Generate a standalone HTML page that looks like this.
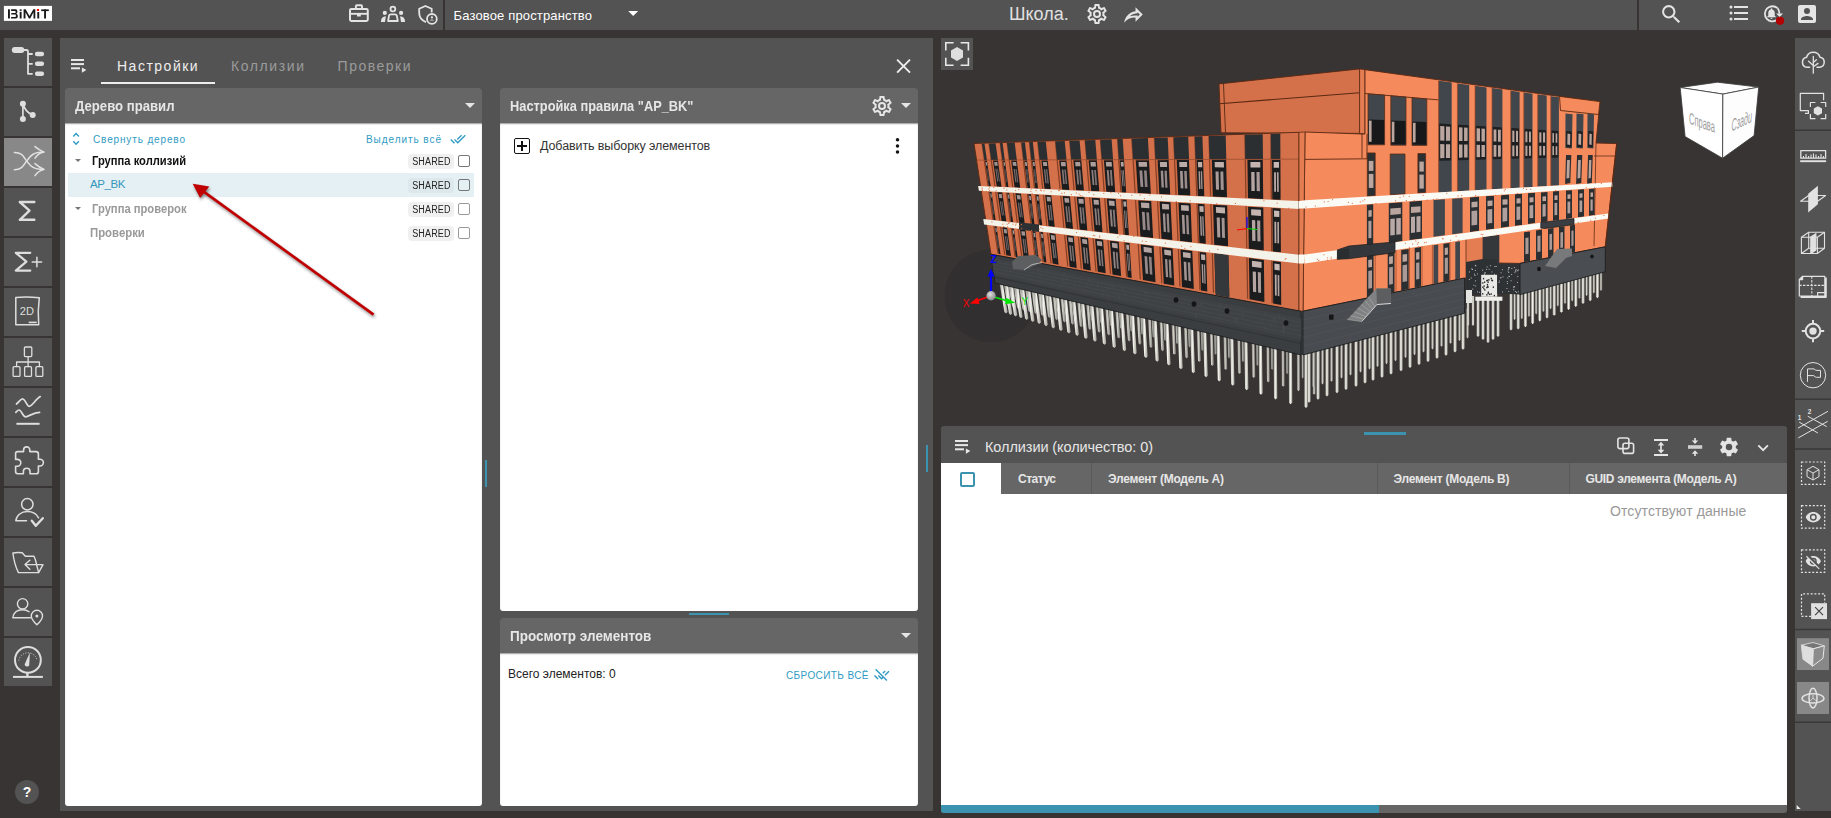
<!DOCTYPE html>
<html lang="ru">
<head>
<meta charset="utf-8">
<title>BIMIT</title>
<style>
*{box-sizing:border-box;margin:0;padding:0}
html,body{width:1831px;height:818px;overflow:hidden;background:#383433;font-family:"Liberation Sans",sans-serif;}
.abs{position:absolute}
#top{position:absolute;left:0;top:0;width:1831px;height:30px;background:#535353}
#logo{position:absolute;left:4px;top:6px;width:48px;height:15px;background:#fff}
.vdiv{position:absolute;top:0;width:2px;height:30px;background:#383433}
.ttxt{position:absolute;color:#fff;white-space:nowrap}
svg{position:absolute;overflow:visible}
/* sidebar */
.sb{position:absolute;left:4px;width:48px;height:48px;background:#535353}
.sb.act{background:#888}
/* main panel */
#main{position:absolute;left:60px;top:38px;width:873px;height:773px;background:#535353}
.tab{position:absolute;top:58px;font-size:14px;letter-spacing:1.5px;color:#9b9b9b;white-space:nowrap}
.phead{position:absolute;height:35px;background:#666;border-radius:4px 4px 0 0;color:#e6e6e6;font-weight:bold;font-size:13.5px;line-height:36px;padding-left:10px;white-space:nowrap}
.pbody{position:absolute;background:#fff;border-radius:0 0 3px 3px;box-shadow:inset 0 1.5px 1.5px -0.5px rgba(0,0,0,.4)}
.caret{position:absolute;width:0;height:0;border-left:5px solid transparent;border-right:5px solid transparent;border-top:5px solid #e6e6e6}
.row{position:absolute;left:69px;width:410px;height:24px}
.shared{position:absolute;left:408px;width:46px;height:15px;border-radius:4px;background:#f0f0f0;color:#222;font-size:10px;line-height:15px;text-align:center;letter-spacing:.2px}
.cb{position:absolute;left:458px;width:12px;height:12px;border:1.5px solid #777;border-radius:2px;background:#fff}
#right{position:absolute;left:1795px;top:38px;width:36px;height:773px;background:#535353}

.lnk{font-size:10px;letter-spacing:1px;color:#2f9bc4;white-space:nowrap}
.trow{font-size:12px;white-space:nowrap}
.tcar{width:0;height:0;border-left:3.3px solid transparent;border-right:3.3px solid transparent;border-top:3.6px solid #777}
.dot{width:3.4px;height:3.4px;border-radius:50%;background:#111}
.th{top:472px;font-size:12px;font-weight:bold;color:#e6e6e6;white-space:nowrap}
.sx{display:inline-block;transform-origin:left center;white-space:nowrap}
.shared span{display:inline-block;transform:scaleX(.9);transform-origin:center}
</style>
</head>
<body>
<!-- TOP BAR -->
<div id="top"></div>
<svg style="left:0;top:0" width="56" height="30" viewBox="0 0 56 30">
<rect x="3.9" y="5.9" width="48.1" height="15" fill="#fff"/>
<g fill="#1a1a1a">
<rect x="8" y="9.3" width="1.9" height="9.2"/>
<path d="M11.1 9.3 H15.6 Q17.4 9.3 17.4 11.2 V11.7 Q17.4 13.4 16.2 13.8 Q17.8 14.2 17.8 16 V16.5 Q17.8 18.5 15.8 18.5 H11.1 V16.9 H15.2 Q15.9 16.9 15.9 16.2 V15.4 Q15.9 14.6 15.2 14.6 H11.3 V13 H15 Q15.6 13 15.6 12.4 V11.5 Q15.6 10.9 15 10.9 H11.1 Z"/>
<rect x="19.7" y="9.3" width="1.9" height="1.6"/>
<rect x="19.7" y="11.8" width="1.9" height="6.7"/>
<path d="M23.6 18.5 V9.3 H25.6 L29.5 16 L33.4 9.3 H35.3 V18.5 H33.5 V12.2 L30.2 18.5 H28.9 L25.5 12.2 V18.5 Z"/>
<rect x="37.3" y="12" width="1.9" height="6.5"/>
<rect x="41.2" y="9.4" width="7.6" height="1.7"/>
<rect x="44.1" y="9.4" width="1.9" height="9.1"/>
</g>
<rect x="36.9" y="9" width="2.1" height="2" fill="#f00"/>
</svg>
<div class="vdiv" style="left:443px"></div>
<div class="vdiv" style="left:1637px"></div>
<div class="ttxt" id="t1" style="left:453.5px;top:7.5px;font-size:13px;letter-spacing:0.15px;">Базовое пространство</div>
<div class="ttxt" id="t2" style="left:1009px;top:4px;font-size:18px;color:#e0e0e0">Школа.</div>

<svg style="left:1085.4px;top:1.95px" width="24" height="24" viewBox="0 0 24 24"><path fill="#e4e4e4" d="M12,8A4,4 0 0,1 16,12A4,4 0 0,1 12,16A4,4 0 0,1 8,12A4,4 0 0,1 12,8M12,10A2,2 0 0,0 10,12A2,2 0 0,0 12,14A2,2 0 0,0 14,12A2,2 0 0,0 12,10M10,22C9.75,22 9.54,21.82 9.5,21.58L9.13,18.93C8.5,18.68 7.96,18.34 7.44,17.94L4.95,18.95C4.73,19.03 4.46,18.95 4.34,18.73L2.34,15.27C2.21,15.05 2.27,14.78 2.46,14.63L4.57,12.97L4.5,12L4.57,11L2.46,9.37C2.27,9.22 2.21,8.95 2.34,8.73L4.34,5.27C4.46,5.05 4.73,4.96 4.95,5.05L7.44,6.05C7.96,5.66 8.5,5.32 9.13,5.07L9.5,2.42C9.54,2.18 9.75,2 10,2H14C14.25,2 14.46,2.18 14.5,2.42L14.87,5.07C15.5,5.32 16.04,5.66 16.56,6.05L19.05,5.05C19.27,4.96 19.54,5.05 19.66,5.27L21.66,8.73C21.79,8.95 21.73,9.22 21.54,9.37L19.43,11L19.5,12L19.43,13L21.54,14.63C21.73,14.78 21.79,15.05 21.66,15.27L19.66,18.73C19.54,18.95 19.27,19.04 19.05,18.95L16.56,17.95C16.04,18.34 15.5,18.68 14.87,18.93L14.5,21.58C14.46,21.82 14.25,22 14,22H10M11.25,4L10.88,6.61C9.68,6.86 8.62,7.5 7.85,8.39L5.44,7.35L4.69,8.65L6.8,10.2C6.4,11.37 6.4,12.64 6.8,13.8L4.68,15.36L5.43,16.66L7.86,15.62C8.63,16.5 9.68,17.14 10.87,17.38L11.24,20H12.76L13.13,17.39C14.32,17.14 15.37,16.5 16.14,15.62L18.57,16.66L19.32,15.36L17.2,13.81C17.6,12.64 17.6,11.37 17.2,10.2L19.31,8.65L18.56,7.35L16.15,8.39C15.38,7.5 14.32,6.86 13.12,6.62L12.75,4H11.25Z"/></svg>
<svg style="left:1120.9px;top:2.0px" width="24.9" height="24.9" viewBox="0 0 24 24"><path fill="#e4e4e4" d="M14,5V9C7,10 4,15 3,20C5.5,16.5 9,14.9 14,14.9V19L21,12L14,5M16,9.83L18.17,12L16,14.17V12.9H14C11.93,12.9 10.07,13.28 8.34,13.85C9.74,12.46 11.54,11.37 14.28,11L16,10.73V9.83Z"/></svg>
<svg style="left:1658.8px;top:1.6px" width="24.7" height="24.7" viewBox="0 0 24 24"><path fill="#e4e4e4" d="M9.5,3A6.5,6.5 0 0,1 16,9.5C16,11.11 15.41,12.59 14.44,13.73L14.71,14H15.5L20.5,19L19,20.5L14,15.5V14.71L13.73,14.44C12.59,15.41 11.11,16 9.5,16A6.5,6.5 0 0,1 3,9.5A6.5,6.5 0 0,1 9.5,3M9.5,5C7,5 5,7 5,9.5C5,12 7,14 9.5,14C12,14 14,12 14,9.5C14,7 12,5 9.5,5Z"/></svg>
<svg style="left:1727.4px;top:1.4px" width="24" height="24" viewBox="0 0 24 24"><path fill="#e4e4e4" d="M7,5H21V7H7V5M7,13V11H21V13H7M4,4.5A1.5,1.5 0 0,1 5.5,6A1.5,1.5 0 0,1 4,7.5A1.5,1.5 0 0,1 2.5,6A1.5,1.5 0 0,1 4,4.5M4,10.5A1.5,1.5 0 0,1 5.5,12A1.5,1.5 0 0,1 4,13.5A1.5,1.5 0 0,1 2.5,12A1.5,1.5 0 0,1 4,10.5M7,19V17H21V19H7M4,16.5A1.5,1.5 0 0,1 5.5,18A1.5,1.5 0 0,1 4,19.5A1.5,1.5 0 0,1 2.5,18A1.5,1.5 0 0,1 4,16.5Z"/></svg>
<svg style="left:1795px;top:1.9px" width="24" height="24" viewBox="0 0 24 24"><path fill="#e4e4e4" d="M6,17C6,15 10,13.9 12,13.9C14,13.9 18,15 18,17V18H6M15,9A3,3 0 0,1 12,12A3,3 0 0,1 9,9A3,3 0 0,1 12,6A3,3 0 0,1 15,9M3,5V19A2,2 0 0,0 5,21H19A2,2 0 0,0 21,19V5A2,2 0 0,0 19,3H5C3.89,3 3,3.9 3,5Z"/></svg>
<svg id="topicons" style="left:0;top:0" width="1831" height="30" viewBox="0 0 1831 30" fill="none" stroke="#e4e4e4" stroke-linejoin="round">
<!-- briefcase -->
<rect x="350" y="9.1" width="17.8" height="11.8" rx="1.4" stroke-width="2"/>
<path d="M355.9 8.5 V6.2 Q355.9 5.2 356.9 5.2 H361 Q362 5.2 362 6.2 V8.5" stroke-width="1.9"/>
<path d="M350.5 13.8 H367.5" stroke-width="1.9"/>
<rect x="357" y="14" width="3.8" height="2.6" rx="0.6" fill="#e4e4e4" stroke="none"/>
<!-- people -->
<circle cx="392.9" cy="9" r="2.4" stroke-width="1.8"/>
<path d="M388.1 21 L389 15.6 Q389.4 14.3 390.8 14.3 H395 Q396.4 14.3 396.8 15.6 L397.8 21 Z" stroke-width="1.8"/>
<circle cx="384.8" cy="12.9" r="2.1" fill="#e4e4e4" stroke="none"/>
<circle cx="401.1" cy="12.9" r="2.1" fill="#e4e4e4" stroke="none"/>
<path d="M380.9 21.9 Q381 16.6 385.9 16.2 L385 21.9 Z" fill="#e4e4e4" stroke="none"/>
<path d="M405.1 21.9 Q405 16.6 400.1 16.2 L401 21.9 Z" fill="#e4e4e4" stroke="none"/>
<!-- shield -->
<path d="M426 22.2 C421 20 419.2 17 419.2 13 V8.8 L425.4 6 L431.7 8.8 V12.4" stroke-width="1.8"/>
<circle cx="431.9" cy="18.9" r="4.9" stroke-width="1.8"/>
<circle cx="431.9" cy="17.4" r="1.1" fill="#e4e4e4" stroke="none"/>
<path d="M429.6 20.6 Q431.9 18.4 434.2 20.6 Z" fill="#e4e4e4" stroke="none"/>
<!-- dropdown arrow -->
<path d="M628.2 11 H638.2 L633.2 16 Z" fill="#fff" stroke="none"/>
<!-- bell cycle -->
<path d="M1777.6 8.2 A7.6 7.6 0 1 0 1777.2 19.8" stroke-width="1.8"/>
<path d="M1776.2 13.4 H1783 L1779.6 17 Z" fill="#e4e4e4" stroke="none"/>
<path d="M1777.6 8.2 A7.6 7.6 0 0 1 1779.3 13.6" stroke-width="1.8"/>
<circle cx="1780" cy="20.8" r="4.1" fill="#b30000" stroke="none"/>
</svg>
<svg style="left:1764.9px;top:6.6px" width="13" height="13" viewBox="0 0 24 24"><path fill="#e4e4e4" d="M12,22A2,2 0 0,0 14,20H10A2,2 0 0,0 12,22M18,16V11C18,7.93 16.36,5.36 13.5,4.68V4A1.5,1.5 0 0,0 12,2.5A1.5,1.5 0 0,0 10.500,4V4.68C7.63,5.36 6,7.92 6,11V16L4,18V19H20V18L18,16Z"/></svg>

<!-- SIDEBAR -->
<div id="sidebar">
<div class="sb" style="top:38px"></div>
<div class="sb" style="top:88px"></div>
<div class="sb act" style="top:138px"></div>
<div class="sb" style="top:188px"></div>
<div class="sb" style="top:238px"></div>
<div class="sb" style="top:288px"></div>
<div class="sb" style="top:338px"></div>
<div class="sb" style="top:388px"></div>
<div class="sb" style="top:438px"></div>
<div class="sb" style="top:488px"></div>
<div class="sb" style="top:538px"></div>
<div class="sb" style="top:588px"></div>
<div class="sb" style="top:638px"></div>
<svg id="sbicons" style="left:0;top:0" width="56" height="700" viewBox="0 0 56 700" fill="none" stroke="#dedede" stroke-linecap="round" stroke-linejoin="round">
<!-- 1 tree -->
<rect x="11.8" y="47" width="12.5" height="6" rx="3" fill="#dedede" stroke="none"/>
<path d="M23 50 H26.5 Q28 50 28 51.5 V73.8 H32.7 M28 54 H32.7 M28 63.8 H32.7" stroke-width="1.8" stroke-linecap="butt"/>
<rect x="34.9" y="51.8" width="9.2" height="4.4" rx="2.2" fill="#dedede" stroke="none"/>
<rect x="34.9" y="61.6" width="9.2" height="4.4" rx="2.2" fill="#dedede" stroke="none"/>
<rect x="34.9" y="71.5" width="9.2" height="4.4" rx="2.2" fill="#dedede" stroke="none"/>
<!-- 2 branch -->
<circle cx="22.9" cy="103.8" r="3" fill="#dedede" stroke="none"/>
<circle cx="22.9" cy="119" r="3" fill="#dedede" stroke="none"/>
<circle cx="32.7" cy="115" r="3" fill="#dedede" stroke="none"/>
<path d="M22.9 103.8 V119 M23.2 104 Q25 112 32.7 115" stroke-width="1.7"/>
<!-- 3 shuffle -->
<g stroke-width="1.5" stroke="#e2e2e2">
<path d="M14.4 152.4 C23 152.4 24 158 26.7 161 C29.4 164 31 169.4 43.5 169.4"/>
<path d="M14.4 169.7 C23 169.7 24 164 26.7 161 C29.4 158 31 152.1 43.5 152.1"/>
<path d="M35 146.6 Q39 150 44 152.1 Q38 153.5 35 158.2"/>
<path d="M35 163.6 Q39 167.3 44 169.4 Q38 171 35 175.6"/>
</g>
<!-- 4 sigma -->
<path d="M34.3 202 H19.8 L29.5 210.6 L19.8 219.8 H34.3" stroke-width="2.4"/>
<!-- 5 sigma+ -->
<path d="M30.3 252.8 H15.8 L26.4 261.6 L15.8 270.6 H30.3" stroke-width="2.2"/>
<path d="M32.2 262 H41.6 M36.9 257.3 V266.7" stroke-width="1.5"/>
<!-- 6 2D -->
<path d="M15.8 297.5 Q27 296.3 39.3 297.8 Q37.5 311 38.7 324.8 H15.8 Z" stroke-width="1.5"/>
<path d="M28.7 322.4 H36.7" stroke-width="1.6" stroke-linecap="butt"/>
<text x="19.8" y="314.8" font-family="Liberation Sans, sans-serif" font-size="11.5" fill="#dedede" stroke="none" textLength="14.2" lengthAdjust="spacingAndGlyphs">2D</text>
<!-- 7 org chart -->
<g stroke-width="1.3">
<rect x="24.4" y="347" width="7.4" height="9.6" rx="1"/>
<path d="M28.1 356.6 V366.6 M16.6 366.6 V362 H39.4 V366.6"/>
<rect x="13.1" y="366.7" width="6.9" height="9.7" rx="1"/>
<rect x="24.6" y="366.7" width="6.9" height="9.7" rx="1"/>
<rect x="35.9" y="366.7" width="6.9" height="9.7" rx="1"/>
</g>
<!-- 8 waves -->
<g stroke-width="1.7">
<path d="M16.5 404 C19 402 21 398.5 23 399 C25.5 399.6 27 406.3 29.3 406.3 C32 406.3 36 399 40.3 396.6"/>
<path d="M15.8 412.3 C17 411 18 409.8 19.3 410 C21.5 410.4 23 417 25.6 416.8 C29 416.5 33 412.6 39.6 412.3"/>
<path d="M16.4 423.8 H39.6" stroke-width="2" stroke-linecap="butt"/>
</g>
<!-- 9 puzzle -->
<path stroke-width="1.6" d="M17.6 451.6 H23.6 V450 A3.1 3.1 0 0 1 29.8 450 V451.6 H36 Q38.4 451.6 38.4 454 V459.2 H40 A3.4 3.4 0 0 1 40 466 H38.4 V471.4 Q38.4 473.8 36 473.8 H30 V471.6 A3.3 3.3 0 0 0 23.4 471.6 V473.8 H17.6 Q15.6 473.8 15.6 471.6 V466.2 H17.4 A3.4 3.4 0 0 0 17.4 459.4 H15.6 V453.8 Q15.6 451.6 17.6 451.6 Z"/>
<!-- 10 user check -->
<circle cx="27.3" cy="504.2" r="5.7" stroke-width="1.5"/>
<path d="M26.5 520.8 H15.8 C16.5 515 21.5 511.6 27.3 511.6 C32.5 511.6 36.6 514 38.6 517.8" stroke-width="1.5"/>
<path d="M31.8 520.8 L35.8 525.8 L42.8 518.2" stroke-width="2.4"/>
<!-- 11 folder arrow -->
<g stroke-width="1.4">
<path d="M12.9 553 Q17.5 552 22.2 552.8 L25.3 556.2 H34 Q35.8 560 36.6 564.6 H43 L38.6 572.6 H18.4 Q14.2 564 12.9 553 Z"/>
<path d="M36.6 564.6 Q37.6 568.5 38.6 572.6"/>
<path d="M25.2 564.6 H36.6 M29.8 560.2 L25 564.6 L29.8 569.2"/>
</g>
<!-- 12 user pin -->
<circle cx="22.6" cy="603.8" r="5.2" stroke-width="1.4"/>
<path d="M30.4 617.8 H12.8 C13.6 612.6 17.6 609.8 22.6 609.8 C25 609.8 27.2 610.4 29 611.8" stroke-width="1.4"/>
<path d="M36.9 624.8 C33.6 621.6 31.3 619 31.3 615.9 A5.6 5.6 0 0 1 42.5 615.9 C42.5 619 40.2 621.6 36.9 624.8 Z" stroke-width="1.4"/>
<circle cx="36.9" cy="616" r="1.5" fill="#dedede" stroke="none"/>
<!-- 13 gauge -->
<circle cx="27.9" cy="659.9" r="12.9" stroke-width="2"/>
<path d="M18.7 660.6 A9.4 9.4 0 0 1 37.1 660" stroke-width="1" stroke-dasharray="1 1.6" stroke-linecap="butt"/>
<path d="M29.9 652.6 L24.6 664.4 A2.6 2.6 0 0 0 29.2 665.6 Z" fill="#dedede" stroke="none"/>
<path d="M27.4 672.6 V676" stroke-width="2.4" stroke-linecap="butt"/>
<path d="M13 676.9 H42.9" stroke-width="2" stroke-linecap="butt"/>
</svg>
<div class="abs" style="left:15px;top:780px;width:24px;height:24px;border-radius:12px;background:#535353;color:#fff;font-weight:bold;font-size:14px;line-height:24px;text-align:center">?</div>
</div>

<!-- MAIN PANEL -->
<div id="main"></div>
<div class="tab" id="tab1" style="left:117px;color:#eee">Настройки</div>
<div class="tab" id="tab2" style="left:231px;letter-spacing:1.6px">Коллизии</div>
<div class="tab" id="tab3" style="left:337.6px">Проверки</div>
<div class="abs" style="left:101px;top:82px;width:114px;height:2px;background:#eee"></div>

<!-- tree panel -->
<div class="phead" id="h1" style="left:65px;top:88px;width:417px"><span class="sx" id="h1s" style="transform:scaleX(0.9387);font-size:14px">Дерево правил</span></div>
<div class="caret" style="left:465px;top:103px"></div>
<div class="pbody" style="left:65px;top:123px;width:417px;height:683px"></div>
<div class="abs lnk" id="l1" style="letter-spacing:0.86px;left:93px;top:134px">Свернуть дерево</div>
<div class="abs lnk" id="l2" style="letter-spacing:0.94px;left:366px;top:134px">Выделить всё</div>
<div class="abs" style="left:68px;top:173px;width:406px;height:24px;background:#e4f0f3"></div>
<div class="abs tcar" style="left:74.7px;top:159.2px"></div>
<div class="abs tcar" style="left:74.7px;top:207.2px"></div>
<div class="abs trow" id="r1" style="left:92px;top:153px;font-weight:bold;color:#111"><span class="sx" id="r1s" style="transform:scaleX(0.8600);font-size:13px">Группа коллизий</span></div>
<div class="abs trow" id="r2" style="letter-spacing:-0.4px;font-size:11.5px;left:90px;top:178px;color:#3596bb">AP_BK</div>
<div class="abs trow" id="r3" style="left:92px;top:201px;font-weight:bold;color:#999"><span class="sx" id="r3s" style="transform:scaleX(0.8622);font-size:13px">Группа проверок</span></div>
<div class="abs trow" id="r4" style="left:90px;top:225px;font-weight:bold;color:#999"><span class="sx" id="r4s" style="transform:scaleX(0.8740);font-size:13px">Проверки</span></div>
<div class="shared" style="top:154px"><span>SHARED</span></div><div class="cb" style="top:155px"></div>
<div class="shared" style="top:178px;background:#dce8eb"><span>SHARED</span></div><div class="cb" style="top:179px;background:#e4f0f3"></div>
<div class="shared" style="top:202px"><span>SHARED</span></div><div class="cb" style="top:203px;border-color:#999"></div>
<div class="shared" style="top:226px"><span>SHARED</span></div><div class="cb" style="top:227px;border-color:#999"></div>

<!-- splitter marks -->
<div class="abs" style="left:485px;top:460px;width:2px;height:27px;background:#3b93af"></div>
<div class="abs" style="left:926px;top:445px;width:2px;height:27px;background:#3b93af"></div>

<!-- rule panel -->
<div class="phead" id="h2" style="left:500px;top:88px;width:418px"><span class="sx" id="h2s" style="transform:scaleX(0.9161);font-size:14px">Настройка правила "AP_BK"</span></div>
<div class="caret" style="left:901px;top:103px"></div>
<div class="pbody" style="left:500px;top:123px;width:418px;height:488px"></div>
<div class="abs" style="left:514px;top:138px;width:16px;height:16px;border:1.5px solid #111;border-radius:2px"></div>
<div class="abs" style="left:517px;top:145.2px;width:10px;height:1.6px;background:#111"></div>
<div class="abs" style="left:521.2px;top:141px;width:1.6px;height:10px;background:#111"></div>
<div class="abs" id="addsel" style="letter-spacing:-0.1px;left:540px;top:139px;font-size:12.5px;color:#333;white-space:nowrap">Добавить выборку элементов</div>
<div class="abs" style="left:689px;top:613px;width:40px;height:2px;background:#3b93af"></div>

<!-- elements panel -->
<div class="phead" id="h3" style="left:500px;top:618px;width:418px"><span class="sx" id="h3s" style="transform:scaleX(0.9645);font-size:14px">Просмотр элементов</span></div>
<div class="caret" style="left:901px;top:633px"></div>
<div class="pbody" style="left:500px;top:653px;width:418px;height:153px"></div>
<div class="abs" id="total" style="left:508px;top:667px;font-size:12px;color:#222;white-space:nowrap">Всего элементов: 0</div>
<div class="abs lnk" id="l3" style="letter-spacing:0.4px;left:786px;top:670px;">СБРОСИТЬ ВСЁ</div>

<svg id="mainicons" style="left:0;top:0" width="1831" height="818" viewBox="0 0 1831 818" fill="none">
<g fill="#e8e8e8" transform="translate(0 0)"><rect x="71" y="59" width="13" height="2"/><rect x="71" y="63.1" width="13" height="2"/><rect x="71" y="67.3" width="9" height="2"/><path d="M81.9 67.4 V72.8 L86.4 70.1 Z"/></g>

<path d="M897.1 59.7 L910 72.6 M910 59.7 L897.1 72.6" stroke="#eee" stroke-width="1.9"/>
<circle cx="897.5" cy="139.8" r="1.75" fill="#111"/><circle cx="897.5" cy="145.9" r="1.75" fill="#111"/><circle cx="897.5" cy="152" r="1.75" fill="#111"/>
<path d="M73.3 136.6 L76.1 133.6 L78.9 136.6 M73.3 141.3 L76.1 144.3 L78.9 141.3" stroke="#2f9bc4" stroke-width="1.4" stroke-linejoin="miter"/>
<g stroke="#2f9bc4" stroke-width="1.4">
<path d="M875.6 669.2 L886.9 680.5"/>
<path d="M874.5 675.5 L878 679"/>
<path d="M878.4 675.5 L881.6 678.7 L883.4 676.9"/>
<path d="M882.8 673.2 L885.2 670.9"/>
<path d="M885 675.3 L889 671.2"/>
</g>
</svg>
<svg style="left:450.4px;top:131.1px" width="16" height="16" viewBox="0 0 24 24"><path fill="#2f9bc4" d="M0.41,13.41L6,19L7.41,17.58L1.83,12M22.24,5.58L11.66,16.17L7.5,12L6.07,13.41L11.66,19L23.66,7M18,7L16.59,5.58L10.24,11.93L11.66,13.34L18,7Z"/></svg>
<svg style="left:870.2px;top:94px" width="24" height="24" viewBox="0 0 24 24"><path fill="#e6e6e6" d="M12,8A4,4 0 0,1 16,12A4,4 0 0,1 12,16A4,4 0 0,1 8,12A4,4 0 0,1 12,8M12,10A2,2 0 0,0 10,12A2,2 0 0,0 12,14A2,2 0 0,0 14,12A2,2 0 0,0 12,10M10,22C9.75,22 9.54,21.82 9.5,21.58L9.13,18.93C8.5,18.68 7.96,18.34 7.44,17.94L4.95,18.95C4.73,19.03 4.46,18.95 4.34,18.73L2.34,15.27C2.21,15.05 2.27,14.78 2.46,14.63L4.57,12.97L4.5,12L4.57,11L2.46,9.37C2.27,9.22 2.21,8.95 2.34,8.73L4.34,5.27C4.46,5.05 4.73,4.96 4.95,5.05L7.44,6.05C7.96,5.66 8.5,5.32 9.13,5.07L9.5,2.42C9.54,2.18 9.75,2 10,2H14C14.25,2 14.46,2.18 14.5,2.42L14.87,5.07C15.5,5.32 16.04,5.66 16.56,6.05L19.05,5.05C19.27,4.96 19.54,5.05 19.66,5.27L21.66,8.73C21.79,8.95 21.73,9.22 21.54,9.37L19.43,11L19.5,12L19.43,13L21.54,14.63C21.73,14.78 21.79,15.05 21.66,15.27L19.66,18.73C19.54,18.95 19.27,19.04 19.05,18.95L16.56,17.95C16.04,18.34 15.5,18.68 14.87,18.93L14.5,21.58C14.46,21.82 14.25,22 14,22H10M11.25,4L10.88,6.61C9.68,6.86 8.62,7.5 7.85,8.39L5.44,7.35L4.69,8.65L6.8,10.2C6.4,11.37 6.4,12.64 6.8,13.8L4.68,15.36L5.43,16.66L7.86,15.62C8.63,16.5 9.68,17.14 10.87,17.38L11.24,20H12.76L13.13,17.39C14.32,17.14 15.37,16.5 16.14,15.62L18.57,16.66L19.32,15.36L17.2,13.81C17.6,12.64 17.6,11.37 17.2,10.2L19.31,8.65L18.56,7.35L16.15,8.39C15.38,7.5 14.32,6.86 13.12,6.62L12.75,4H11.25Z"/></svg>

<svg id="redarrow" style="left:0;top:0;filter:drop-shadow(1.5px 2px 1.5px rgba(0,0,0,.45))" width="500" height="400" viewBox="0 0 500 400">
<path d="M204 191.8 L373.6 314.7" stroke="#c00000" stroke-width="2.7" stroke-linecap="butt"/>
<path d="M192.7 183.7 L209.3 186.6 L200.1 198 Z" fill="#c00000"/>
</svg>

<!-- 3D VIEW -->
<div id="view">
<!--BLD--><svg id="bld" style="left:0;top:0" width="1831" height="430" viewBox="0 0 1831 430" shape-rendering="geometricPrecision">
<defs><linearGradient id="pg" x1="0" x2="1" y1="0" y2="0"><stop offset="0" stop-color="#8a8a82"/><stop offset="0.45" stop-color="#f6f6f0"/><stop offset="1" stop-color="#9c9c94"/></linearGradient><linearGradient id="pg2" x1="0" x2="1" y1="0" y2="0"><stop offset="0" stop-color="#6e6e68"/><stop offset="0.45" stop-color="#d2d2ca"/><stop offset="1" stop-color="#7c7c76"/></linearGradient><linearGradient id="pg3" x1="0" x2="1" y1="0" y2="0"><stop offset="0" stop-color="#5c5c58"/><stop offset="0.45" stop-color="#aeaea8"/><stop offset="1" stop-color="#666662"/></linearGradient><radialGradient id="sg" cx="0.4" cy="0.35" r="0.7"><stop offset="0" stop-color="#e0e0e0"/><stop offset="1" stop-color="#808080"/></radialGradient></defs>
<circle cx="991" cy="295.8" r="46.4" fill="#322f30"/>
<polygon points="1005.4,279.4 1007.6,279.4 1010.6,297.0 1009.5,298.5 1008.4,297.0" fill="url(#pg3)"/>
<polygon points="1010.2,280.5 1012.4,280.5 1015.3,298.3 1014.2,299.8 1013.1,298.3" fill="url(#pg3)"/>
<polygon points="1015.4,281.7 1017.6,281.7 1020.5,299.7 1019.4,301.2 1018.3,299.7" fill="url(#pg3)"/>
<polygon points="1021.0,283.0 1023.2,283.0 1026.0,301.2 1024.9,302.7 1023.8,301.2" fill="url(#pg3)"/>
<polygon points="1026.9,284.4 1029.1,284.4 1031.9,302.8 1030.8,304.3 1029.7,302.8" fill="url(#pg3)"/>
<polygon points="1033.3,285.8 1035.5,285.8 1038.2,304.6 1037.1,306.1 1036.0,304.6" fill="url(#pg3)"/>
<polygon points="1040.0,287.4 1042.2,287.4 1044.9,306.4 1043.8,307.9 1042.7,306.4" fill="url(#pg3)"/>
<polygon points="1047.2,289.0 1049.4,289.0 1052.0,308.3 1050.9,309.8 1049.8,308.3" fill="url(#pg3)"/>
<polygon points="1054.7,290.7 1056.9,290.7 1059.4,310.3 1058.3,311.8 1057.2,310.3" fill="url(#pg3)"/>
<polygon points="1062.6,292.5 1064.8,292.5 1067.2,312.5 1066.1,314.0 1065.0,312.5" fill="url(#pg3)"/>
<polygon points="1070.9,294.5 1073.1,294.5 1075.4,314.7 1074.3,316.2 1073.2,314.7" fill="url(#pg3)"/>
<polygon points="1079.5,296.4 1081.7,296.4 1084.0,317.0 1082.9,318.5 1081.8,317.0" fill="url(#pg3)"/>
<polygon points="1088.6,298.5 1090.8,298.5 1093.0,319.5 1091.9,321.0 1090.8,319.5" fill="url(#pg3)"/>
<polygon points="1098.0,300.7 1100.2,300.7 1102.3,322.0 1101.2,323.5 1100.1,322.0" fill="url(#pg3)"/>
<polygon points="1107.8,302.9 1110.0,302.9 1112.1,324.7 1111.0,326.2 1109.9,324.7" fill="url(#pg3)"/>
<polygon points="1118.1,305.3 1120.3,305.3 1122.2,327.4 1121.1,328.9 1120.0,327.4" fill="url(#pg3)"/>
<polygon points="1128.6,307.7 1130.8,307.7 1132.7,330.3 1131.6,331.8 1130.5,330.3" fill="url(#pg3)"/>
<polygon points="1139.6,310.2 1141.8,310.2 1143.5,333.2 1142.4,334.7 1141.3,333.2" fill="url(#pg3)"/>
<polygon points="1151.0,312.9 1153.2,312.9 1154.8,336.3 1153.7,337.8 1152.6,336.3" fill="url(#pg3)"/>
<polygon points="1162.7,315.6 1164.9,315.6 1166.4,339.5 1165.3,341.0 1164.2,339.5" fill="url(#pg3)"/>
<polygon points="1174.9,318.3 1177.1,318.3 1178.4,342.7 1177.3,344.2 1176.2,342.7" fill="url(#pg3)"/>
<polygon points="1187.4,321.2 1189.6,321.2 1190.8,346.1 1189.7,347.6 1188.6,346.1" fill="url(#pg3)"/>
<polygon points="1200.3,324.2 1202.5,324.2 1203.6,349.6 1202.5,351.1 1201.4,349.6" fill="url(#pg3)"/>
<polygon points="1213.6,327.2 1215.8,327.2 1216.8,353.2 1215.7,354.7 1214.6,353.2" fill="url(#pg3)"/>
<polygon points="1227.3,330.4 1229.5,330.4 1230.3,356.9 1229.2,358.4 1228.1,356.9" fill="url(#pg3)"/>
<polygon points="1241.3,333.6 1243.5,333.6 1244.3,360.7 1243.2,362.2 1242.1,360.7" fill="url(#pg3)"/>
<polygon points="1255.8,336.9 1258.0,336.9 1258.6,364.6 1257.5,366.1 1256.4,364.6" fill="url(#pg3)"/>
<polygon points="1270.6,340.3 1272.8,340.3 1273.3,368.6 1272.2,370.1 1271.1,368.6" fill="url(#pg3)"/>
<polygon points="1285.8,343.8 1288.0,343.8 1288.3,372.7 1287.2,374.2 1286.1,372.7" fill="url(#pg3)"/>
<polygon points="1301.4,347.4 1303.6,347.4 1303.8,376.9 1302.7,378.4 1301.6,376.9" fill="url(#pg3)"/>
<polygon points="1317.4,349.9 1319.6,349.9 1319.6,380.0 1318.5,381.5 1317.4,380.0" fill="url(#pg3)"/>
<polygon points="1003.2,280.4 1006.0,280.4 1010.0,304.5 1008.6,306.0 1007.2,304.5" fill="url(#pg2)"/>
<polygon points="1007.9,281.5 1010.7,281.5 1014.7,305.9 1013.3,307.4 1011.9,305.9" fill="url(#pg2)"/>
<polygon points="1013.1,282.7 1015.9,282.7 1019.8,307.4 1018.4,308.9 1017.0,307.4" fill="url(#pg2)"/>
<polygon points="1018.6,284.0 1021.4,284.0 1025.2,309.0 1023.8,310.5 1022.4,309.0" fill="url(#pg2)"/>
<polygon points="1024.6,285.4 1027.4,285.4 1031.1,310.7 1029.7,312.2 1028.3,310.7" fill="url(#pg2)"/>
<polygon points="1030.9,286.8 1033.7,286.8 1037.3,312.5 1035.9,314.0 1034.5,312.5" fill="url(#pg2)"/>
<polygon points="1037.5,288.4 1040.3,288.4 1043.9,314.5 1042.5,316.0 1041.1,314.5" fill="url(#pg2)"/>
<polygon points="1044.6,290.0 1047.4,290.0 1050.9,316.5 1049.5,318.0 1048.1,316.5" fill="url(#pg2)"/>
<polygon points="1052.1,291.7 1054.9,291.7 1058.2,318.7 1056.8,320.2 1055.4,318.7" fill="url(#pg2)"/>
<polygon points="1059.9,293.5 1062.7,293.5 1066.0,321.0 1064.6,322.5 1063.2,321.0" fill="url(#pg2)"/>
<polygon points="1068.1,295.5 1070.9,295.5 1074.1,323.3 1072.7,324.8 1071.3,323.3" fill="url(#pg2)"/>
<polygon points="1076.7,297.4 1079.5,297.4 1082.6,325.8 1081.2,327.3 1079.8,325.8" fill="url(#pg2)"/>
<polygon points="1085.7,299.5 1088.5,299.5 1091.4,328.4 1090.0,329.9 1088.6,328.4" fill="url(#pg2)"/>
<polygon points="1095.1,301.7 1097.9,301.7 1100.7,331.2 1099.3,332.7 1097.9,331.2" fill="url(#pg2)"/>
<polygon points="1104.8,303.9 1107.6,303.9 1110.3,334.0 1108.9,335.5 1107.5,334.0" fill="url(#pg2)"/>
<polygon points="1114.9,306.3 1117.7,306.3 1120.3,336.9 1118.9,338.4 1117.5,336.9" fill="url(#pg2)"/>
<polygon points="1125.4,308.7 1128.2,308.7 1130.7,340.0 1129.3,341.5 1127.9,340.0" fill="url(#pg2)"/>
<polygon points="1136.3,311.2 1139.1,311.2 1141.4,343.2 1140.0,344.7 1138.6,343.2" fill="url(#pg2)"/>
<polygon points="1147.6,313.9 1150.4,313.9 1152.5,346.4 1151.1,347.9 1149.7,346.4" fill="url(#pg2)"/>
<polygon points="1159.3,316.6 1162.1,316.6 1164.1,349.8 1162.7,351.3 1161.3,349.8" fill="url(#pg2)"/>
<polygon points="1171.3,319.3 1174.1,319.3 1175.9,353.3 1174.5,354.8 1173.1,353.3" fill="url(#pg2)"/>
<polygon points="1183.7,322.2 1186.5,322.2 1188.2,356.9 1186.8,358.4 1185.4,356.9" fill="url(#pg2)"/>
<polygon points="1196.5,325.2 1199.3,325.2 1200.8,360.6 1199.4,362.1 1198.0,360.6" fill="url(#pg2)"/>
<polygon points="1209.7,328.2 1212.5,328.2 1213.8,364.5 1212.4,366.0 1211.0,364.5" fill="url(#pg2)"/>
<polygon points="1223.3,331.4 1226.1,331.4 1227.2,368.4 1225.8,369.9 1224.4,368.4" fill="url(#pg2)"/>
<polygon points="1237.2,334.6 1240.0,334.6 1241.0,372.5 1239.6,374.0 1238.2,372.5" fill="url(#pg2)"/>
<polygon points="1251.6,337.9 1254.4,337.9 1255.2,376.6 1253.8,378.1 1252.4,376.6" fill="url(#pg2)"/>
<polygon points="1266.3,341.3 1269.1,341.3 1269.7,380.9 1268.3,382.4 1266.9,380.9" fill="url(#pg2)"/>
<polygon points="1281.4,344.8 1284.2,344.8 1284.6,385.3 1283.2,386.8 1281.8,385.3" fill="url(#pg2)"/>
<polygon points="1296.9,348.4 1299.7,348.4 1299.9,389.8 1298.5,391.3 1297.1,389.8" fill="url(#pg2)"/>
<polygon points="1312.7,350.9 1315.5,350.9 1315.5,393.2 1314.1,394.7 1312.7,393.2" fill="url(#pg2)"/>
<polygon points="999.4,282.4 1002.6,282.4 1007.6,311.9 1006.0,313.4 1004.4,311.9" fill="url(#pg)"/>
<polygon points="1004.1,283.5 1007.4,283.5 1012.3,313.4 1010.6,314.9 1009.0,313.4" fill="url(#pg)"/>
<polygon points="1009.1,284.7 1012.4,284.7 1017.3,315.0 1015.6,316.5 1014.0,315.0" fill="url(#pg)"/>
<polygon points="1014.6,286.0 1017.9,286.0 1022.6,316.7 1021.0,318.2 1019.4,316.7" fill="url(#pg)"/>
<polygon points="1020.4,287.4 1023.7,287.4 1028.4,318.5 1026.7,320.0 1025.1,318.5" fill="url(#pg)"/>
<polygon points="1026.6,288.8 1029.9,288.8 1034.5,320.5 1032.9,322.0 1031.2,320.5" fill="url(#pg)"/>
<polygon points="1033.2,290.4 1036.5,290.4 1041.0,322.5 1039.3,324.0 1037.7,322.5" fill="url(#pg)"/>
<polygon points="1040.2,292.0 1043.5,292.0 1047.8,324.7 1046.2,326.2 1044.5,324.7" fill="url(#pg)"/>
<polygon points="1047.5,293.7 1050.8,293.7 1055.1,327.0 1053.4,328.5 1051.8,327.0" fill="url(#pg)"/>
<polygon points="1055.3,295.5 1058.6,295.5 1062.7,329.4 1061.0,330.9 1059.3,329.4" fill="url(#pg)"/>
<polygon points="1063.4,297.5 1066.7,297.5 1070.6,332.0 1069.0,333.5 1067.3,332.0" fill="url(#pg)"/>
<polygon points="1071.8,299.4 1075.1,299.4 1078.9,334.6 1077.3,336.1 1075.6,334.6" fill="url(#pg)"/>
<polygon points="1080.7,301.5 1084.0,301.5 1087.7,337.4 1086.0,338.9 1084.3,337.4" fill="url(#pg)"/>
<polygon points="1089.9,303.7 1093.2,303.7 1096.7,340.3 1095.1,341.8 1093.4,340.3" fill="url(#pg)"/>
<polygon points="1099.5,305.9 1102.8,305.9 1106.2,343.3 1104.5,344.8 1102.9,343.3" fill="url(#pg)"/>
<polygon points="1109.5,308.3 1112.8,308.3 1116.0,346.5 1114.3,348.0 1112.7,346.5" fill="url(#pg)"/>
<polygon points="1119.8,310.7 1123.1,310.7 1126.2,349.7 1124.5,351.2 1122.9,349.7" fill="url(#pg)"/>
<polygon points="1130.6,313.2 1133.9,313.2 1136.7,353.1 1135.1,354.6 1133.4,353.1" fill="url(#pg)"/>
<polygon points="1141.7,315.9 1145.0,315.9 1147.7,356.6 1146.0,358.1 1144.3,356.6" fill="url(#pg)"/>
<polygon points="1153.2,318.6 1156.5,318.6 1158.9,360.2 1157.3,361.7 1155.6,360.2" fill="url(#pg)"/>
<polygon points="1165.0,321.3 1168.3,321.3 1170.6,363.9 1169.0,365.4 1167.3,363.9" fill="url(#pg)"/>
<polygon points="1177.3,324.2 1180.6,324.2 1182.7,367.7 1181.0,369.2 1179.3,367.7" fill="url(#pg)"/>
<polygon points="1189.9,327.2 1193.2,327.2 1195.1,371.7 1193.4,373.2 1191.8,371.7" fill="url(#pg)"/>
<polygon points="1202.9,330.2 1206.2,330.2 1207.8,375.7 1206.2,377.2 1204.5,375.7" fill="url(#pg)"/>
<polygon points="1216.2,333.4 1219.5,333.4 1221.0,379.9 1219.3,381.4 1217.7,379.9" fill="url(#pg)"/>
<polygon points="1230.0,336.6 1233.3,336.6 1234.5,384.2 1232.9,385.7 1231.2,384.2" fill="url(#pg)"/>
<polygon points="1244.1,339.9 1247.4,339.9 1248.4,388.7 1246.7,390.2 1245.1,388.7" fill="url(#pg)"/>
<polygon points="1258.6,343.3 1261.9,343.3 1262.7,393.2 1261.0,394.7 1259.3,393.2" fill="url(#pg)"/>
<polygon points="1273.5,346.8 1276.8,346.8 1277.3,397.9 1275.6,399.4 1274.0,397.9" fill="url(#pg)"/>
<polygon points="1288.7,350.4 1292.0,350.4 1292.3,402.7 1290.6,404.2 1289.0,402.7" fill="url(#pg)"/>
<polygon points="1304.3,352.9 1307.7,352.9 1307.7,406.4 1306.0,407.9 1304.3,406.4" fill="url(#pg)"/>
<polygon points="1312.2,348.4 1314.8,348.4 1314.8,385.9 1313.5,387.4 1312.2,385.9" fill="url(#pg2)"/>
<polygon points="1321.2,346.0 1323.8,346.0 1323.8,383.0 1322.5,384.5 1321.2,383.0" fill="url(#pg2)"/>
<polygon points="1330.2,343.7 1332.8,343.7 1332.8,380.2 1331.5,381.7 1330.2,380.2" fill="url(#pg2)"/>
<polygon points="1340.2,341.2 1342.8,341.2 1342.8,377.0 1341.5,378.5 1340.2,377.0" fill="url(#pg2)"/>
<polygon points="1349.2,338.9 1351.8,338.9 1351.8,374.1 1350.5,375.6 1349.2,374.1" fill="url(#pg2)"/>
<polygon points="1359.2,336.3 1361.8,336.3 1361.8,370.9 1360.5,372.4 1359.2,370.9" fill="url(#pg2)"/>
<polygon points="1368.2,334.0 1370.8,334.0 1370.8,368.1 1369.5,369.6 1368.2,368.1" fill="url(#pg2)"/>
<polygon points="1376.2,331.9 1378.8,331.9 1378.8,365.5 1377.5,367.0 1376.2,365.5" fill="url(#pg2)"/>
<polygon points="1385.2,329.6 1387.8,329.6 1387.8,362.7 1386.5,364.2 1385.2,362.7" fill="url(#pg2)"/>
<polygon points="1394.2,327.3 1396.8,327.3 1396.8,359.8 1395.5,361.3 1394.2,359.8" fill="url(#pg2)"/>
<polygon points="1404.2,324.7 1406.8,324.7 1406.8,356.6 1405.5,358.1 1404.2,356.6" fill="url(#pg2)"/>
<polygon points="1413.2,322.4 1415.8,322.4 1415.8,353.8 1414.5,355.3 1413.2,353.8" fill="url(#pg2)"/>
<polygon points="1422.2,320.1 1424.8,320.1 1424.8,350.9 1423.5,352.4 1422.2,350.9" fill="url(#pg2)"/>
<polygon points="1431.2,317.8 1433.8,317.8 1433.8,348.0 1432.5,349.5 1431.2,348.0" fill="url(#pg2)"/>
<polygon points="1440.2,315.5 1442.8,315.5 1442.8,345.2 1441.5,346.7 1440.2,345.2" fill="url(#pg2)"/>
<polygon points="1449.2,313.2 1451.8,313.2 1451.8,342.3 1450.5,343.8 1449.2,342.3" fill="url(#pg2)"/>
<polygon points="1458.2,310.9 1460.8,310.9 1460.8,339.5 1459.5,341.0 1458.2,339.5" fill="url(#pg2)"/>
<polygon points="1466.2,308.8 1468.8,308.8 1468.8,336.9 1467.5,338.4 1466.2,336.9" fill="url(#pg2)"/>
<polygon points="1307.4,351.4 1310.6,351.4 1310.6,401.3 1309.0,402.8 1307.4,401.3" fill="url(#pg)"/>
<polygon points="1316.4,349.0 1319.6,349.0 1319.6,398.2 1318.0,399.7 1316.4,398.2" fill="url(#pg)"/>
<polygon points="1325.4,346.7 1328.6,346.7 1328.6,395.1 1327.0,396.6 1325.4,395.1" fill="url(#pg)"/>
<polygon points="1335.4,344.2 1338.6,344.2 1338.6,391.7 1337.0,393.2 1335.4,391.7" fill="url(#pg)"/>
<polygon points="1344.4,341.9 1347.6,341.9 1347.6,388.6 1346.0,390.1 1344.4,388.6" fill="url(#pg)"/>
<polygon points="1354.4,339.3 1357.6,339.3 1357.6,385.2 1356.0,386.7 1354.4,385.2" fill="url(#pg)"/>
<polygon points="1363.4,337.0 1366.6,337.0 1366.6,382.1 1365.0,383.6 1363.4,382.1" fill="url(#pg)"/>
<polygon points="1371.4,334.9 1374.6,334.9 1374.6,379.3 1373.0,380.8 1371.4,379.3" fill="url(#pg)"/>
<polygon points="1380.4,332.6 1383.6,332.6 1383.6,376.2 1382.0,377.7 1380.4,376.2" fill="url(#pg)"/>
<polygon points="1389.4,330.3 1392.6,330.3 1392.6,373.1 1391.0,374.6 1389.4,373.1" fill="url(#pg)"/>
<polygon points="1399.4,327.7 1402.6,327.7 1402.6,369.7 1401.0,371.2 1399.4,369.7" fill="url(#pg)"/>
<polygon points="1408.4,325.4 1411.6,325.4 1411.6,366.6 1410.0,368.1 1408.4,366.6" fill="url(#pg)"/>
<polygon points="1417.4,323.1 1420.6,323.1 1420.6,363.5 1419.0,365.0 1417.4,363.5" fill="url(#pg)"/>
<polygon points="1426.4,320.8 1429.6,320.8 1429.6,360.4 1428.0,361.9 1426.4,360.4" fill="url(#pg)"/>
<polygon points="1435.4,318.5 1438.6,318.5 1438.6,357.3 1437.0,358.8 1435.4,357.3" fill="url(#pg)"/>
<polygon points="1444.4,316.2 1447.6,316.2 1447.6,354.2 1446.0,355.7 1444.4,354.2" fill="url(#pg)"/>
<polygon points="1453.4,313.9 1456.6,313.9 1456.6,351.1 1455.0,352.6 1453.4,351.1" fill="url(#pg)"/>
<polygon points="1461.4,311.8 1464.6,311.8 1464.6,348.3 1463.0,349.8 1461.4,348.3" fill="url(#pg)"/>
<polygon points="1476.5,300.0 1479.5,300.0 1479.5,335.5 1478.0,337.0 1476.5,335.5" fill="url(#pg)"/>
<polygon points="1481.5,300.0 1484.5,300.0 1484.5,338.5 1483.0,340.0 1481.5,338.5" fill="url(#pg)"/>
<polygon points="1486.5,300.0 1489.5,300.0 1489.5,341.5 1488.0,343.0 1486.5,341.5" fill="url(#pg)"/>
<polygon points="1491.5,300.0 1494.5,300.0 1494.5,338.5 1493.0,340.0 1491.5,338.5" fill="url(#pg)"/>
<polygon points="1496.5,300.0 1499.5,300.0 1499.5,335.5 1498.0,337.0 1496.5,335.5" fill="url(#pg)"/>
<polygon points="1466.8,296.0 1469.2,296.0 1469.2,324.5 1468.0,326.0 1466.8,324.5" fill="url(#pg)"/>
<polygon points="1471.8,296.0 1474.2,296.0 1474.2,324.5 1473.0,326.0 1471.8,324.5" fill="url(#pg)"/>
<polygon points="1513.4,290.6 1515.8,290.6 1515.8,318.5 1514.6,320.0 1513.4,318.5" fill="url(#pg2)"/>
<polygon points="1520.6,290.6 1523.0,290.6 1523.0,317.8 1521.8,319.3 1520.6,317.8" fill="url(#pg2)"/>
<polygon points="1527.8,289.2 1530.2,289.2 1530.2,315.6 1529.0,317.1 1527.8,315.6" fill="url(#pg2)"/>
<polygon points="1535.0,287.2 1537.4,287.2 1537.4,313.0 1536.2,314.5 1535.0,313.0" fill="url(#pg2)"/>
<polygon points="1542.2,285.3 1544.6,285.3 1544.6,310.4 1543.4,311.9 1542.2,310.4" fill="url(#pg2)"/>
<polygon points="1549.4,283.4 1551.8,283.4 1551.8,307.8 1550.6,309.3 1549.4,307.8" fill="url(#pg2)"/>
<polygon points="1556.6,281.4 1559.0,281.4 1559.0,305.1 1557.8,306.6 1556.6,305.1" fill="url(#pg2)"/>
<polygon points="1563.8,279.5 1566.2,279.5 1566.2,302.5 1565.0,304.0 1563.8,302.5" fill="url(#pg2)"/>
<polygon points="1571.0,277.6 1573.4,277.6 1573.4,299.9 1572.2,301.4 1571.0,299.9" fill="url(#pg2)"/>
<polygon points="1578.2,275.6 1580.6,275.6 1580.6,297.3 1579.4,298.8 1578.2,297.3" fill="url(#pg2)"/>
<polygon points="1585.4,273.7 1587.8,273.7 1587.8,294.6 1586.6,296.1 1585.4,294.6" fill="url(#pg2)"/>
<polygon points="1592.6,271.8 1595.0,271.8 1595.0,292.0 1593.8,293.5 1592.6,292.0" fill="url(#pg2)"/>
<polygon points="1599.8,269.8 1602.2,269.8 1602.2,289.4 1601.0,290.9 1599.8,289.4" fill="url(#pg2)"/>
<polygon points="1509.5,292.6 1512.5,292.6 1512.5,329.1 1511.0,330.6 1509.5,329.1" fill="url(#pg)"/>
<polygon points="1516.7,292.6 1519.7,292.6 1519.7,328.1 1518.2,329.6 1516.7,328.1" fill="url(#pg)"/>
<polygon points="1523.9,291.2 1526.9,291.2 1526.9,325.7 1525.4,327.2 1523.9,325.7" fill="url(#pg)"/>
<polygon points="1531.1,289.2 1534.1,289.2 1534.1,322.8 1532.6,324.3 1531.1,322.8" fill="url(#pg)"/>
<polygon points="1538.3,287.3 1541.3,287.3 1541.3,319.9 1539.8,321.4 1538.3,319.9" fill="url(#pg)"/>
<polygon points="1545.5,285.4 1548.5,285.4 1548.5,317.1 1547.0,318.6 1545.5,317.1" fill="url(#pg)"/>
<polygon points="1552.7,283.4 1555.7,283.4 1555.7,314.2 1554.2,315.7 1552.7,314.2" fill="url(#pg)"/>
<polygon points="1559.9,281.5 1562.9,281.5 1562.9,311.3 1561.4,312.8 1559.9,311.3" fill="url(#pg)"/>
<polygon points="1567.1,279.6 1570.1,279.6 1570.1,308.4 1568.6,309.9 1567.1,308.4" fill="url(#pg)"/>
<polygon points="1574.3,277.6 1577.3,277.6 1577.3,305.5 1575.8,307.0 1574.3,305.5" fill="url(#pg)"/>
<polygon points="1581.5,275.7 1584.5,275.7 1584.5,302.6 1583.0,304.1 1581.5,302.6" fill="url(#pg)"/>
<polygon points="1588.7,273.8 1591.7,273.8 1591.7,299.7 1590.2,301.2 1588.7,299.7" fill="url(#pg)"/>
<polygon points="1595.9,271.8 1598.9,271.8 1598.9,296.8 1597.4,298.3 1595.9,296.8" fill="url(#pg)"/>
<polygon points="1219.0,83.9 1359.6,68.9 1359.6,133.4 1221.0,132.8" fill="#d4714a" stroke="#5a2813" stroke-width="0.8999999999999999"/>
<line x1="1219.4" y1="103.7" x2="1359.6" y2="92.8" stroke="#5a2813" stroke-width="1.0499999999999998"/>
<line x1="1223.5" y1="84.0" x2="1225.5" y2="132.8" stroke="#5a2813" stroke-width="0.8999999999999999"/>
<polygon points="1359.6,68.9 1365.0,69.7 1365.0,134.0 1359.6,133.4" fill="#e57d52" stroke="#5a2813" stroke-width="0.75"/>
<polygon points="1365.0,69.7 1438.6,79.8 1559.5,96.4 1600.0,101.6 1596.0,143.0 1616.7,143.6 1605.3,246.8 1520.0,263.4 1497.0,263.0 1466.0,278.0 1303.0,311.2 1305.0,132.0 1362.0,134.0 1365.0,134.0" fill="#f58a5c" stroke="#5a2813" stroke-width="0.8999999999999999"/>
<polygon points="974.0,143.5 1299.0,132.3 1299.0,311.2 991.0,254.3" fill="#d4714a" stroke="#5a2813" stroke-width="0.8999999999999999"/>
<polygon points="981.7,143.7 984.5,143.6 986.9,160.1 984.1,160.1" fill="#2c2f32"/>
<polygon points="984.1,160.1 984.9,160.1 988.8,186.4 988.0,186.4" fill="#cf6a42"/>
<line x1="984.3" y1="160.5" x2="988.0" y2="186.0" stroke="#5a2a18" stroke-width="0.7"/>
<polygon points="985.0,160.5 986.9,160.5 990.7,186.3 988.7,186.2" fill="#1b1c1e"/>
<polygon points="985.6,161.9 986.8,161.9 987.3,165.6 986.1,165.6" fill="#a09290"/>
<polygon points="986.6,168.5 987.0,168.5 988.9,181.2 988.5,181.2" fill="#75696b"/>
<polygon points="987.3,168.5 987.7,168.5 989.5,181.2 989.1,181.2" fill="#6a6062"/>
<polygon points="988.7,191.3 989.5,191.4 993.7,220.2 993.0,220.1" fill="#cf6a42"/>
<line x1="988.9" y1="191.8" x2="993.0" y2="219.7" stroke="#5a2a18" stroke-width="0.7"/>
<polygon points="989.6,191.8 991.5,191.9 995.6,220.2 993.7,220.0" fill="#1b1c1e"/>
<polygon points="990.2,193.4 991.4,193.5 992.0,197.5 990.8,197.5" fill="#a09290"/>
<polygon points="991.3,200.6 991.7,200.7 993.8,214.5 993.3,214.5" fill="#75696b"/>
<polygon points="992.0,200.7 992.4,200.7 994.4,214.6 994.0,214.6" fill="#6a6062"/>
<polygon points="993.8,225.7 994.6,225.8 998.7,254.1 998.0,253.9" fill="#cf6a42"/>
<line x1="993.9" y1="226.2" x2="998.0" y2="253.5" stroke="#5a2a18" stroke-width="0.7"/>
<polygon points="994.6,226.3 996.5,226.5 1000.5,254.2 998.7,253.9" fill="#1b1c1e"/>
<polygon points="995.2,227.9 996.4,228.0 997.0,232.0 995.8,231.8" fill="#a09290"/>
<polygon points="996.3,234.9 996.8,235.0 998.7,248.6 998.3,248.5" fill="#75696b"/>
<polygon points="997.0,235.0 997.4,235.1 999.4,248.7 999.0,248.6" fill="#6a6062"/>
<line x1="981.6" y1="143.2" x2="998.0" y2="253.9" stroke="#8a3f20" stroke-width="0.4"/>
<polygon points="988.7,143.5 995.6,143.2 997.9,160.1 991.0,160.1" fill="#2c2f32"/>
<polygon points="991.0,160.1 993.0,160.1 996.8,186.8 994.8,186.7" fill="#cf6a42"/>
<line x1="991.3" y1="160.5" x2="995.0" y2="186.3" stroke="#5a2a18" stroke-width="0.7"/>
<polygon points="993.0,160.5 997.9,160.5 1001.5,186.8 996.7,186.6" fill="#1b1c1e"/>
<polygon points="994.2,161.9 997.3,161.9 997.8,165.7 994.7,165.7" fill="#a09290"/>
<polygon points="995.3,168.6 996.4,168.7 998.2,181.5 997.1,181.5" fill="#766a6c"/>
<polygon points="997.0,168.7 998.0,168.7 999.8,181.6 998.8,181.6" fill="#6b6163"/>
<polygon points="995.5,191.7 997.5,191.8 1001.6,221.1 999.7,220.9" fill="#cf6a42"/>
<line x1="995.8" y1="192.2" x2="999.9" y2="220.4" stroke="#5a2a18" stroke-width="0.7"/>
<polygon points="997.5,192.3 1002.3,192.6 1006.3,221.4 1001.6,220.9" fill="#1b1c1e"/>
<polygon points="998.7,193.9 1001.7,194.1 1002.3,198.3 999.3,198.0" fill="#a09290"/>
<polygon points="999.9,201.3 1000.9,201.4 1002.9,215.5 1001.9,215.4" fill="#766a6c"/>
<polygon points="1001.5,201.4 1002.5,201.5 1004.5,215.6 1003.5,215.5" fill="#6b6163"/>
<polygon points="1000.5,226.6 1002.4,226.8 1006.5,255.5 1004.6,255.1" fill="#cf6a42"/>
<line x1="1000.8" y1="227.1" x2="1004.8" y2="254.7" stroke="#5a2a18" stroke-width="0.7"/>
<polygon points="1002.5,227.3 1007.1,227.8 1011.0,256.1 1006.4,255.3" fill="#1b1c1e"/>
<polygon points="1003.6,228.9 1006.6,229.3 1007.2,233.4 1004.2,233.0" fill="#a09290"/>
<polygon points="1004.8,236.1 1005.8,236.3 1007.7,250.1 1006.7,249.9" fill="#766a6c"/>
<polygon points="1006.4,236.4 1007.4,236.5 1009.3,250.4 1008.3,250.2" fill="#6b6163"/>
<line x1="988.6" y1="143.0" x2="1004.6" y2="255.1" stroke="#8a3f20" stroke-width="0.4"/>
<polygon points="999.8,143.1 1002.6,143.0 1004.8,160.0 1002.0,160.0" fill="#2c2f32"/>
<polygon points="1002.0,160.0 1002.8,160.0 1006.5,187.3 1005.7,187.2" fill="#cf6a42"/>
<line x1="1002.2" y1="160.5" x2="1005.7" y2="186.8" stroke="#5a2a18" stroke-width="0.7"/>
<polygon points="1002.9,160.5 1004.9,160.5 1008.4,187.1 1006.4,187.0" fill="#1b1c1e"/>
<polygon points="1003.5,161.9 1004.7,161.9 1005.2,165.8 1004.0,165.8" fill="#a19391"/>
<polygon points="1004.5,168.8 1004.9,168.8 1006.6,181.9 1006.2,181.8" fill="#786c6d"/>
<polygon points="1005.1,168.8 1005.5,168.8 1007.3,181.9 1006.9,181.9" fill="#6d6364"/>
<polygon points="1006.4,192.3 1007.2,192.4 1011.2,222.2 1010.4,222.1" fill="#cf6a42"/>
<line x1="1006.6" y1="192.8" x2="1010.4" y2="221.6" stroke="#5a2a18" stroke-width="0.7"/>
<polygon points="1007.2,192.8 1009.2,193.0 1013.1,222.2 1011.1,221.9" fill="#1b1c1e"/>
<polygon points="1007.8,194.5 1009.1,194.6 1009.6,198.8 1008.4,198.7" fill="#a19391"/>
<polygon points="1008.9,201.9 1009.3,202.0 1011.2,216.3 1010.8,216.3" fill="#786c6d"/>
<polygon points="1009.6,202.0 1010.0,202.0 1011.9,216.4 1011.5,216.3" fill="#6d6364"/>
<polygon points="1011.2,227.9 1011.9,228.0 1015.9,257.2 1015.1,257.1" fill="#cf6a42"/>
<line x1="1011.3" y1="228.4" x2="1015.1" y2="256.6" stroke="#5a2a18" stroke-width="0.7"/>
<polygon points="1012.0,228.5 1013.9,228.7 1017.7,257.3 1015.8,257.0" fill="#1b1c1e"/>
<polygon points="1012.6,230.1 1013.8,230.2 1014.4,234.3 1013.1,234.2" fill="#a19391"/>
<polygon points="1013.6,237.4 1014.1,237.5 1015.9,251.5 1015.5,251.4" fill="#786c6d"/>
<polygon points="1014.3,237.5 1014.7,237.5 1016.6,251.6 1016.2,251.5" fill="#6d6364"/>
<line x1="999.7" y1="142.6" x2="1015.1" y2="257.1" stroke="#8a3f20" stroke-width="0.4"/>
<polygon points="1006.8,142.8 1014.7,142.6 1016.8,160.0 1009.0,160.0" fill="#2c2f32"/>
<polygon points="1009.0,160.0 1011.1,160.0 1014.7,187.6 1012.6,187.6" fill="#cf6a42"/>
<line x1="1009.3" y1="160.5" x2="1012.8" y2="187.1" stroke="#5a2a18" stroke-width="0.7"/>
<polygon points="1011.2,160.5 1016.8,160.5 1020.2,187.7 1014.6,187.4" fill="#1b1c1e"/>
<polygon points="1012.5,161.9 1016.1,162.0 1016.6,165.9 1013.0,165.8" fill="#a29492"/>
<polygon points="1013.6,168.9 1014.8,168.9 1016.5,182.2 1015.3,182.2" fill="#796d6e"/>
<polygon points="1015.5,168.9 1016.7,168.9 1018.3,182.3 1017.2,182.2" fill="#6e6465"/>
<polygon points="1013.2,192.7 1015.3,192.8 1019.2,223.1 1017.2,222.8" fill="#cf6a42"/>
<line x1="1013.6" y1="193.2" x2="1017.3" y2="222.4" stroke="#5a2a18" stroke-width="0.7"/>
<polygon points="1015.4,193.3 1020.9,193.6 1024.7,223.5 1019.2,222.8" fill="#1b1c1e"/>
<polygon points="1016.7,195.0 1020.3,195.2 1020.8,199.5 1017.2,199.3" fill="#a29492"/>
<polygon points="1017.9,202.6 1019.1,202.7 1020.9,217.3 1019.7,217.2" fill="#796d6e"/>
<polygon points="1019.8,202.8 1020.9,202.8 1022.8,217.5 1021.6,217.4" fill="#6e6465"/>
<polygon points="1017.9,228.7 1020.0,229.0 1023.8,258.6 1021.8,258.3" fill="#cf6a42"/>
<line x1="1018.2" y1="229.2" x2="1021.9" y2="257.8" stroke="#5a2a18" stroke-width="0.7"/>
<polygon points="1020.0,229.5 1025.5,230.1 1029.1,259.4 1023.7,258.4" fill="#1b1c1e"/>
<polygon points="1021.3,231.2 1024.8,231.6 1025.3,235.8 1021.8,235.4" fill="#a29492"/>
<polygon points="1022.5,238.7 1023.7,238.8 1025.5,253.1 1024.3,252.9" fill="#796d6e"/>
<polygon points="1024.4,238.9 1025.5,239.1 1027.3,253.4 1026.2,253.2" fill="#6e6465"/>
<line x1="1006.7" y1="142.4" x2="1021.8" y2="258.3" stroke="#8a3f20" stroke-width="0.4"/>
<polygon points="1021.1,142.4 1024.9,142.2 1027.0,160.0 1023.2,160.0" fill="#2c2f32"/>
<polygon points="1023.2,160.0 1024.2,160.0 1027.5,188.3 1026.6,188.2" fill="#cf6a42"/>
<line x1="1023.4" y1="160.5" x2="1026.6" y2="187.7" stroke="#5a2a18" stroke-width="0.7"/>
<polygon points="1024.2,160.5 1027.0,160.5 1030.2,188.1 1027.5,188.0" fill="#1b1c1e"/>
<polygon points="1024.9,162.0 1026.7,162.0 1027.2,165.9 1025.4,165.9" fill="#a49693"/>
<polygon points="1025.9,169.0 1026.5,169.0 1028.1,182.6 1027.5,182.6" fill="#7c7071"/>
<polygon points="1026.8,169.0 1027.4,169.1 1029.0,182.7 1028.5,182.7" fill="#716768"/>
<polygon points="1027.2,193.5 1028.2,193.6 1031.9,224.5 1030.9,224.4" fill="#cf6a42"/>
<line x1="1027.4" y1="194.0" x2="1031.0" y2="223.9" stroke="#5a2a18" stroke-width="0.7"/>
<polygon points="1028.2,194.1 1031.0,194.2 1034.5,224.6 1031.9,224.3" fill="#1b1c1e"/>
<polygon points="1029.0,195.8 1030.7,195.9 1031.2,200.2 1029.5,200.1" fill="#a49693"/>
<polygon points="1030.0,203.5 1030.6,203.6 1032.4,218.4 1031.8,218.4" fill="#7c7071"/>
<polygon points="1030.9,203.6 1031.5,203.6 1033.3,218.5 1032.7,218.5" fill="#716768"/>
<polygon points="1031.7,230.4 1032.6,230.6 1036.3,260.9 1035.3,260.7" fill="#cf6a42"/>
<line x1="1031.8" y1="230.9" x2="1035.4" y2="260.3" stroke="#5a2a18" stroke-width="0.7"/>
<polygon points="1032.7,231.0 1035.3,231.4 1038.9,261.1 1036.2,260.6" fill="#1b1c1e"/>
<polygon points="1033.4,232.7 1035.1,233.0 1035.6,237.2 1033.9,237.0" fill="#a49693"/>
<polygon points="1034.4,240.4 1035.0,240.4 1036.7,255.0 1036.2,254.9" fill="#7c7071"/>
<polygon points="1035.3,240.5 1035.9,240.6 1037.6,255.2 1037.1,255.1" fill="#716768"/>
<line x1="1021.0" y1="141.9" x2="1035.3" y2="260.7" stroke="#8a3f20" stroke-width="0.4"/>
<polygon points="1029.1,142.1 1032.8,142.0 1034.8,159.9 1031.1,160.0" fill="#2c2f32"/>
<polygon points="1031.1,160.0 1032.0,160.0 1035.3,188.6 1034.4,188.6" fill="#cf6a42"/>
<line x1="1031.3" y1="160.4" x2="1034.5" y2="188.1" stroke="#5a2a18" stroke-width="0.7"/>
<polygon points="1032.1,160.4 1034.8,160.4 1038.0,188.5 1035.3,188.4" fill="#1b1c1e"/>
<polygon points="1032.8,162.0 1034.5,162.0 1035.0,166.0 1033.3,166.0" fill="#a59794"/>
<polygon points="1033.7,169.1 1034.3,169.1 1035.9,182.9 1035.3,182.9" fill="#7e7173"/>
<polygon points="1034.7,169.1 1035.2,169.2 1036.8,183.0 1036.2,182.9" fill="#73686a"/>
<polygon points="1035.0,194.0 1036.0,194.0 1039.6,225.4 1038.7,225.3" fill="#cf6a42"/>
<line x1="1035.2" y1="194.5" x2="1038.7" y2="224.8" stroke="#5a2a18" stroke-width="0.7"/>
<polygon points="1036.0,194.5 1038.7,194.7 1042.2,225.4 1039.5,225.1" fill="#1b1c1e"/>
<polygon points="1036.7,196.2 1038.4,196.3 1038.9,200.8 1037.2,200.6" fill="#a59794"/>
<polygon points="1037.7,204.1 1038.3,204.1 1040.0,219.2 1039.5,219.2" fill="#7e7173"/>
<polygon points="1038.7,204.2 1039.2,204.2 1040.9,219.3 1040.4,219.3" fill="#73686a"/>
<polygon points="1039.4,231.4 1040.3,231.5 1043.8,262.3 1042.9,262.1" fill="#cf6a42"/>
<line x1="1039.5" y1="231.9" x2="1043.0" y2="261.6" stroke="#5a2a18" stroke-width="0.7"/>
<polygon points="1040.3,232.0 1042.9,232.3 1046.4,262.5 1043.8,262.0" fill="#1b1c1e"/>
<polygon points="1041.0,233.7 1042.7,233.9 1043.2,238.3 1041.5,238.0" fill="#a59794"/>
<polygon points="1042.0,241.4 1042.6,241.5 1044.3,256.3 1043.7,256.2" fill="#7e7173"/>
<polygon points="1042.9,241.6 1043.5,241.6 1045.1,256.5 1044.6,256.4" fill="#73686a"/>
<line x1="1029.0" y1="141.6" x2="1042.9" y2="262.1" stroke="#8a3f20" stroke-width="0.4"/>
<polygon points="1037.4,141.8 1045.8,141.5 1047.7,159.9 1039.4,159.9" fill="#2c2f32"/>
<polygon points="1039.4,159.9 1041.4,159.9 1044.6,189.1 1042.6,189.0" fill="#cf6a42"/>
<line x1="1039.7" y1="160.4" x2="1042.7" y2="188.5" stroke="#5a2a18" stroke-width="0.7"/>
<polygon points="1041.4,160.4 1047.7,160.4 1050.7,189.1 1044.5,188.8" fill="#1b1c1e"/>
<polygon points="1042.8,162.0 1046.8,162.0 1047.3,166.1 1043.3,166.0" fill="#a69895"/>
<polygon points="1043.9,169.3 1045.2,169.3 1046.7,183.3 1045.4,183.3" fill="#807374"/>
<polygon points="1046.0,169.3 1047.3,169.3 1048.8,183.4 1047.5,183.4" fill="#756a6b"/>
<polygon points="1043.2,194.4 1045.2,194.5 1048.6,226.4 1046.7,226.2" fill="#cf6a42"/>
<line x1="1043.5" y1="194.9" x2="1046.8" y2="225.7" stroke="#5a2a18" stroke-width="0.7"/>
<polygon points="1045.2,195.0 1051.3,195.4 1054.7,226.8 1048.6,226.2" fill="#1b1c1e"/>
<polygon points="1046.6,196.8 1050.5,197.1 1051.0,201.6 1047.1,201.3" fill="#a69895"/>
<polygon points="1047.7,204.8 1049.0,204.9 1050.7,220.3 1049.4,220.2" fill="#807374"/>
<polygon points="1049.8,205.0 1051.1,205.1 1052.7,220.5 1051.5,220.4" fill="#756a6b"/>
<polygon points="1047.3,232.4 1049.3,232.6 1052.7,263.9 1050.8,263.5" fill="#cf6a42"/>
<line x1="1047.6" y1="232.9" x2="1051.0" y2="263.1" stroke="#5a2a18" stroke-width="0.7"/>
<polygon points="1049.4,233.1 1055.4,233.9 1058.6,264.7 1052.7,263.6" fill="#1b1c1e"/>
<polygon points="1050.8,235.0 1054.6,235.5 1055.1,239.9 1051.2,239.4" fill="#a69895"/>
<polygon points="1051.8,242.8 1053.1,243.0 1054.8,258.1 1053.5,257.9" fill="#807374"/>
<polygon points="1053.9,243.1 1055.1,243.3 1056.7,258.4 1055.5,258.2" fill="#756a6b"/>
<line x1="1037.3" y1="141.3" x2="1050.8" y2="263.5" stroke="#8a3f20" stroke-width="0.4"/>
<polygon points="1055.1,141.2 1064.7,140.9 1066.5,159.8 1056.9,159.9" fill="#2c2f32"/>
<polygon points="1056.9,159.9 1059.1,159.9 1062.1,189.9 1059.9,189.8" fill="#cf6a42"/>
<line x1="1057.2" y1="160.4" x2="1060.1" y2="189.3" stroke="#5a2a18" stroke-width="0.7"/>
<polygon points="1059.2,160.4 1066.5,160.4 1069.3,190.0 1062.1,189.6" fill="#1b1c1e"/>
<polygon points="1060.8,162.0 1065.5,162.0 1065.9,166.2 1061.2,166.2" fill="#a99a98"/>
<polygon points="1061.8,169.5 1063.4,169.5 1064.8,184.0 1063.2,183.9" fill="#847778"/>
<polygon points="1064.3,169.5 1065.8,169.5 1067.2,184.1 1065.7,184.0" fill="#796e6f"/>
<polygon points="1060.5,195.4 1062.7,195.5 1065.9,228.3 1063.7,228.1" fill="#cf6a42"/>
<line x1="1060.8" y1="195.9" x2="1063.9" y2="227.6" stroke="#5a2a18" stroke-width="0.7"/>
<polygon points="1062.7,196.0 1069.9,196.4 1073.0,228.9 1065.9,228.1" fill="#1b1c1e"/>
<polygon points="1064.3,197.9 1068.9,198.2 1069.3,202.8 1064.8,202.5" fill="#a99a98"/>
<polygon points="1065.4,206.2 1066.9,206.3 1068.5,222.1 1066.9,222.0" fill="#847778"/>
<polygon points="1067.9,206.3 1069.3,206.4 1070.8,222.4 1069.4,222.2" fill="#796e6f"/>
<polygon points="1064.4,234.5 1066.5,234.8 1069.7,267.0 1067.6,266.6" fill="#cf6a42"/>
<line x1="1064.7" y1="235.0" x2="1067.8" y2="266.1" stroke="#5a2a18" stroke-width="0.7"/>
<polygon points="1066.6,235.3 1073.7,236.2 1076.7,268.0 1069.7,266.7" fill="#1b1c1e"/>
<polygon points="1068.1,237.2 1072.7,237.8 1073.1,242.3 1068.6,241.7" fill="#a99a98"/>
<polygon points="1069.2,245.3 1070.7,245.5 1072.2,261.1 1070.7,260.8" fill="#847778"/>
<polygon points="1071.6,245.6 1073.1,245.9 1074.6,261.4 1073.1,261.2" fill="#796e6f"/>
<line x1="1055.0" y1="140.7" x2="1067.6" y2="266.6" stroke="#8a3f20" stroke-width="0.4"/>
<polygon points="1069.3,140.7 1079.6,140.4 1081.3,159.8 1071.1,159.8" fill="#2c2f32"/>
<polygon points="1071.1,159.8 1073.4,159.8 1076.1,190.5 1073.9,190.4" fill="#cf6a42"/>
<line x1="1071.4" y1="160.4" x2="1074.1" y2="189.9" stroke="#5a2a18" stroke-width="0.7"/>
<polygon points="1073.4,160.3 1081.3,160.3 1083.9,190.6 1076.1,190.3" fill="#1b1c1e"/>
<polygon points="1075.1,162.0 1080.1,162.0 1080.5,166.3 1075.5,166.3" fill="#ab9c9a"/>
<polygon points="1076.1,169.7 1077.8,169.7 1079.1,184.5 1077.4,184.5" fill="#887b7b"/>
<polygon points="1078.8,169.7 1080.4,169.7 1081.7,184.6 1080.1,184.6" fill="#7d7272"/>
<polygon points="1074.4,196.2 1076.7,196.3 1079.7,229.9 1077.5,229.7" fill="#cf6a42"/>
<line x1="1074.8" y1="196.7" x2="1077.7" y2="229.2" stroke="#5a2a18" stroke-width="0.7"/>
<polygon points="1076.7,196.8 1084.5,197.3 1087.3,230.5 1079.7,229.6" fill="#1b1c1e"/>
<polygon points="1078.4,198.8 1083.4,199.1 1083.8,203.8 1078.8,203.5" fill="#ab9c9a"/>
<polygon points="1079.5,207.2 1081.1,207.3 1082.6,223.5 1080.9,223.4" fill="#887b7b"/>
<polygon points="1082.1,207.4 1083.7,207.5 1085.1,223.8 1083.6,223.6" fill="#7d7272"/>
<polygon points="1078.1,236.2 1080.3,236.5 1083.3,269.4 1081.1,269.0" fill="#cf6a42"/>
<line x1="1078.4" y1="236.8" x2="1081.3" y2="268.5" stroke="#5a2a18" stroke-width="0.7"/>
<polygon points="1080.4,237.0 1088.0,237.9 1090.8,270.5 1083.3,269.2" fill="#1b1c1e"/>
<polygon points="1082.0,239.0 1086.9,239.6 1087.3,244.3 1082.4,243.6" fill="#ab9c9a"/>
<polygon points="1083.1,247.3 1084.7,247.5 1086.1,263.4 1084.5,263.1" fill="#887b7b"/>
<polygon points="1085.7,247.6 1087.2,247.9 1088.6,263.8 1087.1,263.6" fill="#7d7272"/>
<line x1="1069.3" y1="140.2" x2="1081.1" y2="269.0" stroke="#8a3f20" stroke-width="0.4"/>
<polygon points="1084.7,140.2 1095.3,139.9 1096.9,159.8 1086.4,159.8" fill="#2c2f32"/>
<polygon points="1086.4,159.8 1088.6,159.8 1091.2,191.2 1089.0,191.1" fill="#cf6a42"/>
<line x1="1086.7" y1="160.3" x2="1089.2" y2="190.6" stroke="#5a2a18" stroke-width="0.7"/>
<polygon points="1088.6,160.3 1096.8,160.3 1099.3,191.3 1091.2,191.0" fill="#1b1c1e"/>
<polygon points="1090.4,162.0 1095.6,162.0 1096.0,166.4 1090.8,166.4" fill="#ad9f9c"/>
<polygon points="1091.4,169.9 1093.1,169.9 1094.4,185.1 1092.6,185.0" fill="#8c7f7f"/>
<polygon points="1094.2,169.9 1095.9,169.9 1097.1,185.2 1095.4,185.1" fill="#817576"/>
<polygon points="1089.5,197.0 1091.7,197.2 1094.5,231.6 1092.4,231.3" fill="#cf6a42"/>
<line x1="1089.8" y1="197.6" x2="1092.6" y2="230.8" stroke="#5a2a18" stroke-width="0.7"/>
<polygon points="1091.7,197.7 1099.8,198.2 1102.5,232.2 1094.5,231.3" fill="#1b1c1e"/>
<polygon points="1093.5,199.7 1098.6,200.0 1099.0,204.8 1093.9,204.5" fill="#ad9f9c"/>
<polygon points="1094.5,208.3 1096.2,208.4 1097.6,225.1 1095.8,224.9" fill="#8c7f7f"/>
<polygon points="1097.3,208.5 1098.9,208.6 1100.2,225.3 1098.6,225.2" fill="#817576"/>
<polygon points="1092.9,238.0 1095.1,238.3 1097.9,272.1 1095.7,271.7" fill="#cf6a42"/>
<line x1="1093.2" y1="238.6" x2="1096.0" y2="271.2" stroke="#5a2a18" stroke-width="0.7"/>
<polygon points="1095.1,238.8 1103.1,239.8 1105.7,273.2 1097.8,271.8" fill="#1b1c1e"/>
<polygon points="1096.8,240.9 1101.9,241.5 1102.3,246.3 1097.2,245.6" fill="#ad9f9c"/>
<polygon points="1097.8,249.4 1099.6,249.6 1100.9,265.9 1099.2,265.6" fill="#8c7f7f"/>
<polygon points="1100.6,249.8 1102.2,250.0 1103.5,266.4 1101.9,266.1" fill="#817576"/>
<line x1="1084.7" y1="139.7" x2="1095.7" y2="271.7" stroke="#8a3f20" stroke-width="0.4"/>
<polygon points="1100.0,139.7 1111.6,139.3 1113.1,159.7 1101.6,159.7" fill="#2c2f32"/>
<polygon points="1101.6,159.7 1103.9,159.7 1106.3,192.0 1104.0,191.8" fill="#cf6a42"/>
<line x1="1101.9" y1="160.3" x2="1104.2" y2="191.3" stroke="#5a2a18" stroke-width="0.7"/>
<polygon points="1103.9,160.3 1113.0,160.3 1115.2,192.1 1106.3,191.7" fill="#1b1c1e"/>
<polygon points="1105.8,162.0 1111.6,162.0 1112.0,166.6 1106.2,166.5" fill="#b0a19e"/>
<polygon points="1106.8,170.1 1108.7,170.1 1109.9,185.7 1107.9,185.6" fill="#908382"/>
<polygon points="1109.9,170.1 1111.8,170.1 1112.9,185.8 1111.0,185.7" fill="#857979"/>
<polygon points="1104.5,197.9 1106.7,198.0 1109.4,233.3 1107.1,233.0" fill="#cf6a42"/>
<line x1="1104.8" y1="198.4" x2="1107.3" y2="232.5" stroke="#5a2a18" stroke-width="0.7"/>
<polygon points="1106.8,198.6 1115.7,199.1 1118.2,234.0 1109.4,233.0" fill="#1b1c1e"/>
<polygon points="1108.7,200.6 1114.4,200.9 1114.8,205.9 1109.1,205.5" fill="#b0a19e"/>
<polygon points="1109.7,209.4 1111.6,209.6 1112.9,226.6 1110.9,226.4" fill="#908382"/>
<polygon points="1112.8,209.7 1114.6,209.8 1115.8,226.9 1114.0,226.7" fill="#857979"/>
<polygon points="1107.6,239.9 1109.9,240.1 1112.5,274.7 1110.3,274.3" fill="#cf6a42"/>
<line x1="1108.0" y1="240.4" x2="1110.5" y2="273.8" stroke="#5a2a18" stroke-width="0.7"/>
<polygon points="1109.9,240.7 1118.7,241.8 1121.1,276.0 1112.5,274.4" fill="#1b1c1e"/>
<polygon points="1111.8,242.8 1117.4,243.5 1117.8,248.4 1112.2,247.6" fill="#b0a19e"/>
<polygon points="1112.8,251.5 1114.7,251.8 1115.9,268.5 1114.0,268.1" fill="#908382"/>
<polygon points="1115.8,251.9 1117.6,252.2 1118.8,269.0 1117.0,268.6" fill="#857979"/>
<line x1="1100.0" y1="139.2" x2="1110.3" y2="274.3" stroke="#8a3f20" stroke-width="0.4"/>
<polygon points="1117.2,139.1 1122.7,138.9 1124.1,159.7 1118.6,159.7" fill="#2c2f32"/>
<polygon points="1118.6,159.7 1119.7,159.7 1121.9,192.7 1120.9,192.6" fill="#cf6a42"/>
<line x1="1118.8" y1="160.2" x2="1120.9" y2="192.1" stroke="#5a2a18" stroke-width="0.7"/>
<polygon points="1119.7,160.2 1124.1,160.2 1126.2,192.6 1121.9,192.4" fill="#1b1c1e"/>
<polygon points="1120.7,162.0 1123.5,162.0 1123.8,166.6 1121.0,166.6" fill="#b2a3a0"/>
<polygon points="1121.4,170.3 1122.4,170.3 1123.4,186.2 1122.5,186.1" fill="#958786"/>
<polygon points="1122.9,170.3 1123.8,170.3 1124.8,186.2 1124.0,186.2" fill="#8a7d7d"/>
<polygon points="1121.3,198.8 1122.3,198.9 1124.7,235.0 1123.7,234.9" fill="#cf6a42"/>
<line x1="1121.4" y1="199.4" x2="1123.8" y2="234.3" stroke="#5a2a18" stroke-width="0.7"/>
<polygon points="1122.3,199.5 1126.6,199.7 1128.9,235.2 1124.7,234.7" fill="#1b1c1e"/>
<polygon points="1123.3,201.5 1126.1,201.6 1126.4,206.7 1123.7,206.5" fill="#b2a3a0"/>
<polygon points="1124.1,210.5 1125.0,210.6 1126.2,228.0 1125.2,227.9" fill="#958786"/>
<polygon points="1125.6,210.6 1126.4,210.7 1127.6,228.1 1126.7,228.0" fill="#8a7d7d"/>
<polygon points="1124.2,241.9 1125.2,242.0 1127.6,277.4 1126.6,277.3" fill="#cf6a42"/>
<line x1="1124.3" y1="242.5" x2="1126.6" y2="276.7" stroke="#5a2a18" stroke-width="0.7"/>
<polygon points="1125.2,242.6 1129.5,243.1 1131.7,277.9 1127.6,277.2" fill="#1b1c1e"/>
<polygon points="1126.2,244.6 1128.9,245.0 1129.2,250.0 1126.5,249.6" fill="#b2a3a0"/>
<polygon points="1127.0,253.5 1127.9,253.6 1129.0,270.7 1128.1,270.5" fill="#958786"/>
<polygon points="1128.4,253.7 1129.3,253.8 1130.4,270.9 1129.5,270.8" fill="#8a7d7d"/>
<line x1="1117.2" y1="138.6" x2="1126.6" y2="277.3" stroke="#8a3f20" stroke-width="0.4"/>
<polygon points="1131.5,138.6 1147.9,138.1 1149.1,159.6 1132.8,159.6" fill="#2c2f32"/>
<polygon points="1132.8,159.6 1135.8,159.6 1137.8,193.4 1134.9,193.3" fill="#cf6a42"/>
<line x1="1133.2" y1="160.2" x2="1135.2" y2="192.7" stroke="#5a2a18" stroke-width="0.7"/>
<polygon points="1135.8,160.2 1149.0,160.2 1150.8,193.7 1137.8,193.1" fill="#1b1c1e"/>
<polygon points="1138.5,162.0 1146.9,162.0 1147.2,166.8 1138.8,166.7" fill="#b4a5a2"/>
<polygon points="1139.5,170.5 1142.3,170.5 1143.3,186.9 1140.5,186.8" fill="#988a8a"/>
<polygon points="1144.0,170.5 1146.7,170.6 1147.6,187.0 1144.9,186.9" fill="#8e8181"/>
<polygon points="1135.2,199.6 1138.2,199.8 1140.4,236.8 1137.5,236.4" fill="#cf6a42"/>
<line x1="1135.6" y1="200.2" x2="1137.8" y2="235.9" stroke="#5a2a18" stroke-width="0.7"/>
<polygon points="1138.2,200.4 1151.2,201.1 1153.1,237.9 1140.4,236.5" fill="#1b1c1e"/>
<polygon points="1140.9,202.5 1149.2,203.0 1149.4,208.3 1141.2,207.7" fill="#b4a5a2"/>
<polygon points="1141.9,211.8 1144.7,212.0 1145.7,230.0 1142.9,229.7" fill="#988a8a"/>
<polygon points="1146.3,212.2 1149.0,212.4 1150.0,230.4 1147.4,230.1" fill="#8e8181"/>
<polygon points="1137.9,243.6 1140.8,244.0 1143.0,280.2 1140.1,279.7" fill="#cf6a42"/>
<line x1="1138.3" y1="244.2" x2="1140.4" y2="279.2" stroke="#5a2a18" stroke-width="0.7"/>
<polygon points="1140.8,244.6 1153.6,246.1 1155.5,282.2 1143.0,279.9" fill="#1b1c1e"/>
<polygon points="1143.5,246.8 1151.6,247.9 1151.9,253.0 1143.8,251.9" fill="#b4a5a2"/>
<polygon points="1144.5,256.0 1147.2,256.4 1148.2,273.9 1145.5,273.5" fill="#988a8a"/>
<polygon points="1148.8,256.6 1151.5,257.0 1152.4,274.7 1149.8,274.2" fill="#8e8181"/>
<line x1="1131.5" y1="138.1" x2="1140.1" y2="279.7" stroke="#8a3f20" stroke-width="0.4"/>
<polygon points="1154.1,137.9 1167.7,137.4 1168.7,159.5 1155.2,159.6" fill="#2c2f32"/>
<polygon points="1155.2,159.6 1157.5,159.6 1159.3,194.4 1157.0,194.3" fill="#cf6a42"/>
<line x1="1155.5" y1="160.2" x2="1157.3" y2="193.8" stroke="#5a2a18" stroke-width="0.7"/>
<polygon points="1157.6,160.2 1168.6,160.1 1170.2,194.6 1159.3,194.1" fill="#1b1c1e"/>
<polygon points="1159.8,162.0 1166.9,162.0 1167.1,167.0 1160.1,166.9" fill="#b8a9a5"/>
<polygon points="1160.7,170.8 1163.1,170.8 1163.9,187.6 1161.5,187.6" fill="#9e908f"/>
<polygon points="1164.5,170.8 1166.8,170.8 1167.5,187.8 1165.3,187.7" fill="#948786"/>
<polygon points="1157.3,200.9 1159.6,201.0 1161.5,239.1 1159.3,238.9" fill="#cf6a42"/>
<line x1="1157.6" y1="201.5" x2="1159.5" y2="238.3" stroke="#5a2a18" stroke-width="0.7"/>
<polygon points="1159.6,201.6 1170.5,202.2 1172.3,240.1 1161.5,238.8" fill="#1b1c1e"/>
<polygon points="1161.9,203.8 1168.9,204.2 1169.1,209.6 1162.2,209.2" fill="#b8a9a5"/>
<polygon points="1162.8,213.4 1165.1,213.6 1166.0,232.0 1163.7,231.8" fill="#9e908f"/>
<polygon points="1166.5,213.7 1168.8,213.8 1169.6,232.4 1167.4,232.2" fill="#948786"/>
<polygon points="1159.7,246.3 1161.9,246.6 1163.8,284.0 1161.6,283.6" fill="#cf6a42"/>
<line x1="1160.0" y1="246.9" x2="1161.8" y2="283.1" stroke="#5a2a18" stroke-width="0.7"/>
<polygon points="1161.9,247.2 1172.6,248.5 1174.3,285.6 1163.8,283.7" fill="#1b1c1e"/>
<polygon points="1164.1,249.5 1171.0,250.4 1171.2,255.7 1164.4,254.7" fill="#b8a9a5"/>
<polygon points="1165.0,258.9 1167.3,259.3 1168.2,277.3 1165.9,276.9" fill="#9e908f"/>
<polygon points="1168.7,259.4 1170.9,259.8 1171.7,277.9 1169.5,277.6" fill="#948786"/>
<line x1="1154.1" y1="137.3" x2="1161.6" y2="283.6" stroke="#8a3f20" stroke-width="0.4"/>
<polygon points="1173.3,137.2 1188.2,136.7 1189.1,159.5 1174.3,159.5" fill="#2c2f32"/>
<polygon points="1174.3,159.5 1176.7,159.5 1178.2,195.3 1175.8,195.2" fill="#cf6a42"/>
<line x1="1174.6" y1="160.1" x2="1176.1" y2="194.6" stroke="#5a2a18" stroke-width="0.7"/>
<polygon points="1176.7,160.1 1188.9,160.1 1190.3,195.6 1178.2,195.0" fill="#1b1c1e"/>
<polygon points="1179.2,162.0 1187.0,162.0 1187.2,167.1 1179.4,167.0" fill="#bbaca8"/>
<polygon points="1180.0,171.0 1182.7,171.0 1183.4,188.4 1180.7,188.3" fill="#a39593"/>
<polygon points="1184.2,171.1 1186.7,171.1 1187.4,188.5 1184.9,188.4" fill="#998b8a"/>
<polygon points="1176.1,201.9 1178.5,202.1 1180.1,241.2 1177.8,241.0" fill="#cf6a42"/>
<line x1="1176.4" y1="202.6" x2="1178.0" y2="240.4" stroke="#5a2a18" stroke-width="0.7"/>
<polygon points="1178.5,202.7 1190.6,203.4 1192.0,242.3 1180.1,240.9" fill="#1b1c1e"/>
<polygon points="1181.0,204.9 1188.7,205.4 1188.9,211.0 1181.2,210.5" fill="#bbaca8"/>
<polygon points="1181.8,214.8 1184.4,215.0 1185.2,234.0 1182.6,233.7" fill="#a39593"/>
<polygon points="1186.0,215.1 1188.4,215.3 1189.2,234.4 1186.7,234.1" fill="#998b8a"/>
<polygon points="1178.1,248.6 1180.4,248.9 1182.1,287.3 1179.8,286.9" fill="#cf6a42"/>
<line x1="1178.4" y1="249.3" x2="1180.0" y2="286.3" stroke="#5a2a18" stroke-width="0.7"/>
<polygon points="1180.5,249.5 1192.3,251.0 1193.8,289.1 1182.0,287.0" fill="#1b1c1e"/>
<polygon points="1182.9,251.9 1190.5,252.9 1190.7,258.3 1183.1,257.3" fill="#bbaca8"/>
<polygon points="1183.7,261.6 1186.3,262.0 1187.0,280.5 1184.5,280.1" fill="#a39593"/>
<polygon points="1187.8,262.2 1190.2,262.5 1191.0,281.2 1188.5,280.8" fill="#998b8a"/>
<line x1="1173.3" y1="136.6" x2="1179.8" y2="286.9" stroke="#8a3f20" stroke-width="0.4"/>
<polygon points="1194.5,136.5 1202.4,136.3 1203.2,159.4 1195.3,159.5" fill="#2c2f32"/>
<polygon points="1195.3,159.5 1196.5,159.4 1197.8,196.2 1196.6,196.2" fill="#cf6a42"/>
<line x1="1195.5" y1="160.1" x2="1196.7" y2="195.6" stroke="#5a2a18" stroke-width="0.7"/>
<polygon points="1196.5,160.1 1203.1,160.1 1204.3,196.2 1197.8,195.9" fill="#1b1c1e"/>
<polygon points="1197.9,162.0 1202.1,162.0 1202.3,167.2 1198.1,167.2" fill="#beafab"/>
<polygon points="1198.5,171.2 1199.9,171.3 1200.5,189.0 1199.1,188.9" fill="#a99a98"/>
<polygon points="1200.7,171.3 1202.1,171.3 1202.6,189.1 1201.3,189.0" fill="#9e908f"/>
<polygon points="1196.8,203.1 1198.0,203.2 1199.4,243.4 1198.2,243.3" fill="#cf6a42"/>
<line x1="1197.0" y1="203.7" x2="1198.4" y2="242.7" stroke="#5a2a18" stroke-width="0.7"/>
<polygon points="1198.0,203.8 1204.5,204.2 1205.8,243.8 1199.4,243.1" fill="#1b1c1e"/>
<polygon points="1199.4,206.1 1203.5,206.3 1203.7,212.0 1199.6,211.7" fill="#beafab"/>
<polygon points="1200.0,216.2 1201.4,216.3 1202.0,235.7 1200.6,235.5" fill="#a99a98"/>
<polygon points="1202.2,216.3 1203.5,216.4 1204.2,235.9 1202.8,235.7" fill="#9e908f"/>
<polygon points="1198.5,251.1 1199.7,251.3 1201.0,290.8 1199.9,290.5" fill="#cf6a42"/>
<line x1="1198.7" y1="251.8" x2="1200.0" y2="289.9" stroke="#5a2a18" stroke-width="0.7"/>
<polygon points="1199.7,251.9 1206.1,252.7 1207.3,291.6 1201.0,290.4" fill="#1b1c1e"/>
<polygon points="1201.0,254.2 1205.1,254.7 1205.3,260.3 1201.2,259.7" fill="#beafab"/>
<polygon points="1201.6,264.1 1203.0,264.3 1203.6,283.3 1202.2,283.1" fill="#a99a98"/>
<polygon points="1203.8,264.4 1205.1,264.6 1205.7,283.7 1204.4,283.5" fill="#9e908f"/>
<line x1="1194.5" y1="135.9" x2="1199.9" y2="290.5" stroke="#8a3f20" stroke-width="0.4"/>
<polygon points="1208.6,136.1 1225.7,135.5 1226.3,159.4 1209.3,159.4" fill="#2c2f32"/>
<polygon points="1209.3,159.4 1211.8,159.4 1212.8,197.0 1210.4,196.8" fill="#cf6a42"/>
<line x1="1209.6" y1="160.0" x2="1210.7" y2="196.2" stroke="#5a2a18" stroke-width="0.7"/>
<polygon points="1211.8,160.0 1226.1,160.0 1227.0,197.3 1212.8,196.6" fill="#1b1c1e"/>
<polygon points="1214.7,162.0 1223.8,162.0 1224.0,167.4 1214.8,167.3" fill="#c0b1ac"/>
<polygon points="1215.5,171.5 1218.6,171.5 1219.0,189.7 1216.0,189.6" fill="#ac9d9b"/>
<polygon points="1220.4,171.5 1223.3,171.6 1223.8,189.9 1220.8,189.7" fill="#a29492"/>
<polygon points="1210.6,203.9 1213.0,204.0 1214.2,245.1 1211.8,244.8" fill="#cf6a42"/>
<line x1="1210.9" y1="204.5" x2="1212.1" y2="244.2" stroke="#5a2a18" stroke-width="0.7"/>
<polygon points="1213.1,204.7 1227.2,205.5 1228.1,246.3 1214.2,244.8" fill="#1b1c1e"/>
<polygon points="1215.9,207.1 1224.9,207.6 1225.1,213.4 1216.1,212.8" fill="#c0b1ac"/>
<polygon points="1216.7,217.4 1219.8,217.6 1220.3,237.5 1217.3,237.2" fill="#ac9d9b"/>
<polygon points="1221.6,217.8 1224.5,218.0 1225.0,238.0 1222.1,237.7" fill="#a29492"/>
<polygon points="1212.1,252.8 1214.4,253.1 1215.6,293.4 1213.3,293.0" fill="#cf6a42"/>
<line x1="1212.4" y1="253.5" x2="1213.5" y2="292.4" stroke="#5a2a18" stroke-width="0.7"/>
<polygon points="1214.5,253.8 1228.4,255.5 1229.3,295.6 1215.6,293.1" fill="#1b1c1e"/>
<polygon points="1214.4,253.1 1228.3,254.8 1229.3,297.5 1215.6,295.0" fill="#34383b"/>
<line x1="1208.6" y1="135.4" x2="1213.3" y2="293.0" stroke="#8a3f20" stroke-width="0.4"/>
<polygon points="1244.6,134.8 1262.7,134.2 1263.0,159.2 1245.0,159.3" fill="#2c2f32"/>
<polygon points="1245.0,159.3 1247.3,159.3 1248.0,198.6 1245.7,198.5" fill="#cf6a42"/>
<line x1="1245.3" y1="160.0" x2="1246.0" y2="197.8" stroke="#5a2a18" stroke-width="0.7"/>
<polygon points="1247.4,160.0 1262.8,159.9 1263.2,199.0 1248.0,198.3" fill="#1b1c1e"/>
<polygon points="1250.4,162.0 1260.3,162.0 1260.4,167.6 1250.5,167.6" fill="#c5b5b1"/>
<polygon points="1251.2,171.9 1254.5,172.0 1254.8,191.0 1251.4,190.9" fill="#b5a6a3"/>
<polygon points="1256.5,172.0 1259.6,172.0 1259.9,191.2 1256.7,191.1" fill="#ab9c9a"/>
<polygon points="1245.8,205.9 1248.1,206.0 1248.8,249.0 1246.5,248.7" fill="#cf6a42"/>
<line x1="1246.1" y1="206.6" x2="1246.8" y2="248.1" stroke="#5a2a18" stroke-width="0.7"/>
<polygon points="1248.1,206.7 1263.3,207.5 1263.8,250.4 1248.8,248.7" fill="#1b1c1e"/>
<polygon points="1251.1,209.2 1260.9,209.8 1261.0,215.9 1251.2,215.2" fill="#c5b5b1"/>
<polygon points="1251.9,220.0 1255.2,220.3 1255.5,241.1 1252.2,240.8" fill="#b5a6a3"/>
<polygon points="1257.1,220.4 1260.2,220.6 1260.5,241.6 1257.4,241.3" fill="#ab9c9a"/>
<polygon points="1246.7,257.1 1248.9,257.4 1249.6,299.6 1247.4,299.2" fill="#cf6a42"/>
<line x1="1247.0" y1="257.8" x2="1247.7" y2="298.5" stroke="#5a2a18" stroke-width="0.7"/>
<polygon points="1248.9,258.1 1263.9,259.9 1264.4,301.9 1249.6,299.2" fill="#1b1c1e"/>
<polygon points="1251.9,260.7 1261.5,262.0 1261.6,268.0 1252.0,266.7" fill="#c5b5b1"/>
<polygon points="1252.7,271.4 1255.9,271.8 1256.2,292.3 1253.0,291.7" fill="#b5a6a3"/>
<polygon points="1257.8,272.1 1260.9,272.6 1261.1,293.1 1258.1,292.6" fill="#ab9c9a"/>
<line x1="1244.6" y1="134.2" x2="1247.4" y2="299.2" stroke="#8a3f20" stroke-width="0.4"/>
<polygon points="1270.6,134.0 1280.3,133.6 1280.4,159.2 1270.8,159.2" fill="#2c2f32"/>
<polygon points="1270.8,159.2 1272.0,159.2 1272.3,199.7 1271.2,199.7" fill="#cf6a42"/>
<line x1="1271.0" y1="159.9" x2="1271.3" y2="199.0" stroke="#5a2a18" stroke-width="0.7"/>
<polygon points="1272.0,159.9 1280.4,159.9 1280.6,199.8 1272.3,199.4" fill="#1b1c1e"/>
<polygon points="1273.7,162.1 1279.0,162.1 1279.0,167.8 1273.7,167.7" fill="#c9b9b4"/>
<polygon points="1274.1,172.2 1275.9,172.2 1276.0,191.8 1274.2,191.7" fill="#bbaba8"/>
<polygon points="1276.9,172.2 1278.6,172.3 1278.8,191.9 1277.1,191.8" fill="#b1a19f"/>
<polygon points="1271.2,207.3 1272.4,207.4 1272.7,251.7 1271.6,251.6" fill="#cf6a42"/>
<line x1="1271.4" y1="208.0" x2="1271.7" y2="250.9" stroke="#5a2a18" stroke-width="0.7"/>
<polygon points="1272.4,208.1 1280.6,208.5 1280.9,252.3 1272.7,251.4" fill="#1b1c1e"/>
<polygon points="1274.0,210.6 1279.3,210.9 1279.3,217.1 1274.1,216.8" fill="#c9b9b4"/>
<polygon points="1274.4,221.7 1276.2,221.8 1276.4,243.2 1274.6,243.0" fill="#bbaba8"/>
<polygon points="1277.3,221.9 1279.0,222.0 1279.1,243.5 1277.4,243.3" fill="#b1a19f"/>
<polygon points="1271.7,260.2 1272.8,260.4 1273.2,303.8 1272.1,303.6" fill="#cf6a42"/>
<line x1="1271.8" y1="260.9" x2="1272.2" y2="303.0" stroke="#5a2a18" stroke-width="0.7"/>
<polygon points="1272.8,261.1 1280.9,262.1 1281.2,304.9 1273.2,303.5" fill="#1b1c1e"/>
<polygon points="1274.4,263.6 1279.6,264.3 1279.7,270.4 1274.5,269.7" fill="#c9b9b4"/>
<polygon points="1274.8,274.5 1276.6,274.8 1276.7,295.8 1275.0,295.5" fill="#bbaba8"/>
<polygon points="1277.6,274.9 1279.3,275.2 1279.4,296.2 1277.8,295.9" fill="#b1a19f"/>
<line x1="1270.6" y1="133.3" x2="1272.1" y2="303.6" stroke="#8a3f20" stroke-width="0.4"/>
<line x1="976.6" y1="160.1" x2="1299.0" y2="159.1" stroke="#7a3a20" stroke-width="0.5"/>
<polygon points="978.1,185.9 1299.0,201.0 1299.0,208.9 978.9,190.8" fill="#f4f3ea"/>
<polygon points="983.3,219.0 1299.0,254.7 1299.0,263.6 984.1,224.5" fill="#f4f3ea"/>
<polygon points="1019.0,222.3 1039.0,224.6 1039.0,231.9 1019.0,229.6" fill="#2e3134"/>
<polygon points="1299.0,132.3 1305.0,132.0 1303.0,311.2 1299.0,311.2" fill="#e57d52" stroke="#5a2813" stroke-width="0.75"/>
<polygon points="1299.0,201.0 1305.0,200.3 1305.0,208.6 1299.0,208.6" fill="#fbfbf5"/>
<polygon points="1299.0,254.5 1305.0,254.5 1304.5,263.4 1299.0,263.4" fill="#fbfbf5"/>
<line x1="1305.0" y1="159.4" x2="1367.0" y2="158.8" stroke="#5a2813" stroke-width="0.8999999999999999"/>
<line x1="1362.0" y1="134.0" x2="1362.0" y2="158.0" stroke="#5a2813" stroke-width="0.8999999999999999"/>
<line x1="1367.0" y1="134.0" x2="1367.0" y2="158.8" stroke="#5a2813" stroke-width="0.8999999999999999"/>
<line x1="1365.0" y1="93.5" x2="1438.6" y2="99.9" stroke="#5a2813" stroke-width="0.8999999999999999"/>
<polygon points="1368.0,93.9 1384.6,95.1 1384.6,144.8 1368.0,144.8" fill="#41464c" stroke="#5a2813" stroke-width="0.75"/>
<polygon points="1368.5,119.4 1384.1,119.9 1384.1,144.2 1368.5,144.2" fill="#17181a"/>
<polygon points="1369.0,120.6 1371.6,120.6 1371.6,141.8 1369.0,141.8" fill="#bba69f"/>
<polygon points="1390.8,95.8 1406.0,97.0 1406.0,145.2 1390.8,145.2" fill="#41464c" stroke="#5a2813" stroke-width="0.75"/>
<polygon points="1391.3,120.5 1405.5,121.0 1405.5,144.6 1391.3,144.6" fill="#17181a"/>
<polygon points="1391.8,121.7 1394.4,121.7 1394.4,142.2 1391.8,142.2" fill="#bba69f"/>
<polygon points="1412.0,97.8 1426.8,99.0 1426.8,145.4 1412.0,145.4" fill="#41464c" stroke="#5a2813" stroke-width="0.75"/>
<polygon points="1412.5,121.6 1426.3,122.1 1426.3,144.8 1412.5,144.8" fill="#17181a"/>
<polygon points="1413.0,122.8 1415.6,122.8 1415.6,142.4 1413.0,142.4" fill="#bba69f"/>
<polygon points="1367.3,152.9 1375.2,152.9 1375.2,195.6 1367.3,196.2" fill="#2c2f32" stroke="#5a2813" stroke-width="0.75"/>
<polygon points="1368.8,160.9 1373.4,160.9 1373.4,170.9 1368.8,170.9" fill="#bba69f"/>
<polygon points="1368.8,173.9 1373.4,173.9 1373.4,187.9 1368.8,187.9" fill="#bba69f"/>
<polygon points="1390.2,154.0 1405.0,154.0 1405.0,194.1 1390.2,194.7" fill="#41464c" stroke="#5a2813" stroke-width="0.75"/>
<polygon points="1417.9,153.6 1425.6,153.6 1425.6,192.4 1417.9,193.0" fill="#2c2f32" stroke="#5a2813" stroke-width="0.75"/>
<polygon points="1419.4,161.6 1423.8,161.6 1423.8,171.6 1419.4,171.6" fill="#bba69f"/>
<polygon points="1419.4,174.6 1423.8,174.6 1423.8,188.6 1419.4,188.6" fill="#bba69f"/>
<polygon points="1438.6,80.8 1451.7,82.6 1451.7,191.7 1438.6,192.4" fill="#41464c"/>
<polygon points="1439.2,123.5 1451.1,124.2 1451.1,160.4 1439.2,160.8" fill="#1d1f21"/>
<polygon points="1440.2,126.0 1444.4,126.3 1444.4,140.7 1440.2,140.6" fill="#bba69f"/>
<polygon points="1440.2,144.1 1444.4,144.2 1444.4,158.1 1440.2,158.2" fill="#bba69f"/>
<polygon points="1446.0,126.4 1450.1,126.7 1450.1,140.8 1446.0,140.7" fill="#bba69f"/>
<polygon points="1446.0,144.2 1450.1,144.3 1450.1,158.0 1446.0,158.1" fill="#bba69f"/>
<line x1="1438.6" y1="80.8" x2="1438.6" y2="192.4" stroke="#a04a28" stroke-width="0.75"/>
<polygon points="1457.4,83.4 1469.2,85.0 1469.2,190.6 1457.4,191.3" fill="#41464c"/>
<polygon points="1458.0,124.7 1468.6,125.3 1468.6,160.0 1458.0,160.3" fill="#1d1f21"/>
<polygon points="1459.0,127.2 1462.5,127.4 1462.5,141.0 1459.0,141.0" fill="#bba69f"/>
<polygon points="1459.0,144.5 1462.5,144.5 1462.5,157.6 1459.0,157.7" fill="#bba69f"/>
<polygon points="1464.1,127.5 1467.6,127.8 1467.6,141.1 1464.1,141.1" fill="#bba69f"/>
<polygon points="1464.1,144.6 1467.6,144.6 1467.6,157.5 1464.1,157.6" fill="#bba69f"/>
<line x1="1457.4" y1="83.4" x2="1457.4" y2="191.3" stroke="#a04a28" stroke-width="0.75"/>
<polygon points="1475.0,85.8 1486.5,87.4 1486.5,189.6 1475.0,190.3" fill="#41464c"/>
<polygon points="1475.6,125.8 1485.9,126.4 1485.9,159.5 1475.6,159.8" fill="#1d1f21"/>
<polygon points="1476.6,128.3 1480.0,128.5 1480.0,141.3 1476.6,141.3" fill="#bba69f"/>
<polygon points="1476.6,144.8 1480.0,144.8 1480.0,157.2 1476.6,157.2" fill="#bba69f"/>
<polygon points="1481.5,128.6 1484.9,128.8 1484.9,141.4 1481.5,141.4" fill="#bba69f"/>
<polygon points="1481.5,144.9 1484.9,144.9 1484.9,157.0 1481.5,157.1" fill="#bba69f"/>
<line x1="1475.0" y1="85.8" x2="1475.0" y2="190.3" stroke="#a04a28" stroke-width="0.75"/>
<polygon points="1492.0,88.1 1502.4,89.6 1502.4,188.7 1492.0,189.3" fill="#41464c"/>
<polygon points="1492.6,126.8 1501.8,127.4 1501.8,159.1 1492.6,159.3" fill="#1d1f21"/>
<polygon points="1493.6,129.4 1496.4,129.6 1496.4,141.6 1493.6,141.6" fill="#bba69f"/>
<polygon points="1493.6,145.1 1496.4,145.1 1496.4,156.7 1493.6,156.8" fill="#bba69f"/>
<polygon points="1498.0,129.7 1500.8,129.8 1500.8,141.7 1498.0,141.7" fill="#bba69f"/>
<polygon points="1498.0,145.2 1500.8,145.2 1500.8,156.6 1498.0,156.7" fill="#bba69f"/>
<line x1="1492.0" y1="88.1" x2="1492.0" y2="189.3" stroke="#a04a28" stroke-width="0.75"/>
<polygon points="1510.7,90.7 1519.6,91.9 1519.6,187.7 1510.7,188.2" fill="#41464c"/>
<polygon points="1511.3,128.0 1519.0,128.5 1519.0,158.6 1511.3,158.8" fill="#1d1f21"/>
<polygon points="1512.3,130.6 1514.4,130.7 1514.4,142.0 1512.3,141.9" fill="#bba69f"/>
<polygon points="1512.3,145.4 1514.4,145.5 1514.4,156.2 1512.3,156.3" fill="#bba69f"/>
<polygon points="1516.0,130.8 1518.0,130.9 1518.0,142.0 1516.0,142.0" fill="#bba69f"/>
<polygon points="1516.0,145.5 1518.0,145.5 1518.0,156.1 1516.0,156.2" fill="#bba69f"/>
<line x1="1510.7" y1="90.7" x2="1510.7" y2="188.2" stroke="#a04a28" stroke-width="0.75"/>
<polygon points="1523.8,92.5 1532.5,93.7 1532.5,186.9 1523.8,187.4" fill="#41464c"/>
<polygon points="1524.4,128.8 1531.9,129.3 1531.9,158.2 1524.4,158.4" fill="#1d1f21"/>
<polygon points="1525.4,131.4 1527.4,131.5 1527.4,142.2 1525.4,142.2" fill="#bba69f"/>
<polygon points="1525.4,145.7 1527.4,145.7 1527.4,155.9 1525.4,155.9" fill="#bba69f"/>
<polygon points="1529.0,131.6 1530.9,131.7 1530.9,142.3 1529.0,142.2" fill="#bba69f"/>
<polygon points="1529.0,145.7 1530.9,145.8 1530.9,155.8 1529.0,155.8" fill="#bba69f"/>
<line x1="1523.8" y1="92.5" x2="1523.8" y2="187.4" stroke="#a04a28" stroke-width="0.75"/>
<polygon points="1537.7,94.4 1546.7,95.6 1546.7,186.1 1537.7,186.6" fill="#41464c"/>
<polygon points="1538.3,129.7 1546.1,130.2 1546.1,157.9 1538.3,158.1" fill="#1d1f21"/>
<polygon points="1539.3,132.3 1541.4,132.4 1541.4,142.4 1539.3,142.4" fill="#bba69f"/>
<polygon points="1539.3,145.9 1541.4,145.9 1541.4,155.5 1539.3,155.5" fill="#bba69f"/>
<polygon points="1543.0,132.5 1545.1,132.6 1545.1,142.5 1543.0,142.5" fill="#bba69f"/>
<polygon points="1543.0,146.0 1545.1,146.0 1545.1,155.4 1543.0,155.4" fill="#bba69f"/>
<line x1="1537.7" y1="94.4" x2="1537.7" y2="186.6" stroke="#a04a28" stroke-width="0.75"/>
<polygon points="1550.8,96.2 1558.9,97.3 1558.9,185.4 1550.8,185.8" fill="#41464c"/>
<polygon points="1551.4,130.5 1558.3,131.0 1558.3,157.5 1551.4,157.7" fill="#1d1f21"/>
<polygon points="1552.4,133.1 1554.0,133.2 1554.0,142.7 1552.4,142.6" fill="#bba69f"/>
<polygon points="1552.4,146.1 1554.0,146.2 1554.0,155.1 1552.4,155.2" fill="#bba69f"/>
<polygon points="1555.6,133.3 1557.3,133.4 1557.3,142.7 1555.6,142.7" fill="#bba69f"/>
<polygon points="1555.6,146.2 1557.3,146.2 1557.3,155.0 1555.6,155.1" fill="#bba69f"/>
<line x1="1550.8" y1="96.2" x2="1550.8" y2="185.8" stroke="#a04a28" stroke-width="0.75"/>
<polygon points="1559.5,96.4 1600.0,101.6 1598.6,114.5 1560.5,110.5" fill="#f58a5c" stroke="#5a2813" stroke-width="0.8999999999999999"/>
<polygon points="1565.5,113.5 1572.5,114.3 1571.9,148.5 1565.3,148.0" fill="#41464c"/>
<polygon points="1566.3,131.0 1571.7,131.5 1571.3,147.5 1566.1,147.0" fill="#1d1f21"/>
<polygon points="1567.5,133.5 1570.3,134.0 1570.1,145.0 1567.3,144.6" fill="#bba69f"/>
<polygon points="1566.0,155.0 1571.3,155.0 1570.3,183.0 1565.1,184.0" fill="#2c2f32"/>
<polygon points="1567.1,160.0 1569.9,160.0 1569.3,178.0 1566.5,178.6" fill="#bba69f"/>
<polygon points="1576.5,113.5 1583.5,114.3 1582.9,148.5 1576.3,148.0" fill="#41464c"/>
<polygon points="1577.3,131.0 1582.7,131.5 1582.3,147.5 1577.1,147.0" fill="#1d1f21"/>
<polygon points="1578.5,133.5 1581.3,134.0 1581.1,145.0 1578.3,144.6" fill="#bba69f"/>
<polygon points="1577.0,155.0 1582.3,155.0 1581.3,183.0 1576.1,184.0" fill="#2c2f32"/>
<polygon points="1578.1,160.0 1580.9,160.0 1580.3,178.0 1577.5,178.6" fill="#bba69f"/>
<polygon points="1587.5,113.5 1594.0,114.3 1593.4,148.5 1587.3,148.0" fill="#41464c"/>
<polygon points="1588.3,131.0 1593.2,131.5 1592.8,147.5 1588.1,147.0" fill="#1d1f21"/>
<polygon points="1589.5,133.5 1591.8,134.0 1591.6,145.0 1589.3,144.6" fill="#bba69f"/>
<polygon points="1588.0,155.0 1592.8,155.0 1591.8,183.0 1587.1,184.0" fill="#2c2f32"/>
<polygon points="1589.1,160.0 1591.4,160.0 1590.8,178.0 1588.5,178.6" fill="#bba69f"/>
<line x1="1596.0" y1="143.0" x2="1594.0" y2="246.0" stroke="#5a2813" stroke-width="0.75"/>
<line x1="1594.0" y1="156.0" x2="1615.6" y2="156.0" stroke="#5a2813" stroke-width="0.75"/>
<polygon points="1366.9,204.7 1373.2,204.3 1373.2,245.0 1366.9,245.8" fill="#2c2f32"/>
<polygon points="1368.4,210.4 1371.7,210.1 1371.7,216.6 1368.4,216.9" fill="#bba69f"/>
<polygon points="1368.4,221.0 1371.4,220.7 1371.4,237.9 1368.4,238.2" fill="#b0a09d"/>
<polygon points="1388.8,203.2 1402.3,202.2 1402.3,241.1 1388.8,242.9" fill="#2c2f32"/>
<polygon points="1390.3,208.6 1400.8,207.8 1400.8,214.0 1390.3,214.9" fill="#bba69f"/>
<polygon points="1390.3,218.9 1394.8,218.5 1394.8,235.0 1390.3,235.5" fill="#b9a9a6"/>
<polygon points="1396.3,218.3 1400.8,217.9 1400.8,234.2 1396.3,234.8" fill="#b9a9a6"/>
<polygon points="1409.5,201.7 1422.0,200.8 1422.0,238.4 1409.5,240.1" fill="#2c2f32"/>
<polygon points="1411.0,206.9 1420.5,206.2 1420.5,212.2 1411.0,213.1" fill="#bba69f"/>
<polygon points="1411.0,216.9 1415.0,216.5 1415.0,232.5 1411.0,233.0" fill="#b9a9a6"/>
<polygon points="1416.5,216.4 1420.5,216.0 1420.5,231.8 1416.5,232.3" fill="#b9a9a6"/>
<polygon points="1433.5,200.0 1444.9,199.2 1444.9,235.3 1433.5,236.8" fill="#41464c"/>
<polygon points="1452.2,198.7 1462.6,197.9 1462.6,232.9 1452.2,234.3" fill="#41464c"/>
<polygon points="1470.0,197.4 1479.0,196.8 1479.0,230.7 1470.0,231.9" fill="#2c2f32"/>
<polygon points="1471.5,202.1 1477.5,201.6 1477.5,207.1 1471.5,207.6" fill="#bba69f"/>
<polygon points="1471.5,211.1 1477.2,210.5 1477.2,224.8 1471.5,225.5" fill="#b0a09d"/>
<polygon points="1486.0,196.3 1494.0,195.7 1494.0,228.7 1486.0,229.7" fill="#2c2f32"/>
<polygon points="1487.5,200.8 1492.5,200.4 1492.5,205.7 1487.5,206.2" fill="#bba69f"/>
<polygon points="1487.5,209.5 1492.2,209.1 1492.2,223.0 1487.5,223.5" fill="#b0a09d"/>
<polygon points="1501.0,195.2 1509.0,194.6 1509.0,226.6 1501.0,227.7" fill="#2c2f32"/>
<polygon points="1502.5,199.6 1507.5,199.2 1507.5,204.4 1502.5,204.8" fill="#bba69f"/>
<polygon points="1502.5,208.1 1507.2,207.6 1507.2,221.1 1502.5,221.7" fill="#b0a09d"/>
<polygon points="1515.0,194.2 1522.0,193.7 1522.0,224.9 1515.0,225.8" fill="#2c2f32"/>
<polygon points="1516.5,198.5 1520.5,198.2 1520.5,203.2 1516.5,203.6" fill="#bba69f"/>
<polygon points="1516.5,206.7 1520.2,206.4 1520.2,219.5 1516.5,219.9" fill="#b0a09d"/>
<polygon points="1528.0,193.3 1535.0,192.8 1535.0,223.1 1528.0,224.1" fill="#2c2f32"/>
<polygon points="1529.5,197.5 1533.5,197.2 1533.5,202.0 1529.5,202.4" fill="#bba69f"/>
<polygon points="1529.5,205.5 1533.2,205.1 1533.2,217.9 1529.5,218.3" fill="#b0a09d"/>
<polygon points="1541.0,192.4 1547.5,191.9 1547.5,221.4 1541.0,222.3" fill="#2c2f32"/>
<polygon points="1542.5,196.4 1546.0,196.2 1546.0,200.9 1542.5,201.2" fill="#bba69f"/>
<polygon points="1542.5,204.2 1545.7,203.9 1545.7,216.3 1542.5,216.7" fill="#b0a09d"/>
<polygon points="1553.0,191.5 1559.0,191.1 1559.0,219.9 1553.0,220.7" fill="#2c2f32"/>
<polygon points="1554.5,195.5 1557.5,195.2 1557.5,199.9 1554.5,200.1" fill="#bba69f"/>
<polygon points="1554.5,203.0 1557.2,202.8 1557.2,214.9 1554.5,215.3" fill="#b0a09d"/>
<polygon points="1566.0,190.6 1572.0,190.2 1572.0,218.1 1566.0,218.9" fill="#2c2f32"/>
<polygon points="1567.5,194.4 1570.5,194.2 1570.5,198.7 1567.5,199.0" fill="#bba69f"/>
<polygon points="1567.5,201.8 1570.2,201.5 1570.2,213.3 1567.5,213.6" fill="#b0a09d"/>
<polygon points="1578.0,189.8 1584.0,189.3 1584.0,216.5 1578.0,217.3" fill="#2c2f32"/>
<polygon points="1579.5,193.5 1582.5,193.3 1582.5,197.6 1579.5,197.9" fill="#bba69f"/>
<polygon points="1579.5,200.6 1582.2,200.4 1582.2,211.8 1579.5,212.2" fill="#b0a09d"/>
<polygon points="1589.0,189.0 1594.5,188.6 1594.5,215.1 1589.0,215.8" fill="#2c2f32"/>
<polygon points="1590.5,192.6 1593.0,192.4 1593.0,196.7 1590.5,196.9" fill="#bba69f"/>
<polygon points="1590.5,199.6 1592.7,199.4 1592.7,210.5 1590.5,210.8" fill="#b0a09d"/>
<polygon points="1366.9,255.1 1373.6,254.1 1373.6,296.2 1366.9,297.6" fill="#2c2f32"/>
<polygon points="1368.3,259.9 1372.0,259.4 1372.0,267.0 1368.3,267.6" fill="#bba69f"/>
<polygon points="1368.3,271.0 1372.0,270.3 1372.0,288.1 1368.3,288.8" fill="#a99a98"/>
<polygon points="1387.7,252.0 1394.5,251.0 1394.5,291.9 1387.7,293.3" fill="#2c2f32"/>
<polygon points="1389.1,256.7 1392.9,256.1 1392.9,263.5 1389.1,264.2" fill="#bba69f"/>
<polygon points="1389.1,267.4 1392.9,266.8 1392.9,284.0 1389.1,284.8" fill="#a99a98"/>
<polygon points="1401.2,250.0 1408.7,248.9 1408.7,289.0 1401.2,290.5" fill="#2c2f32"/>
<polygon points="1402.6,254.6 1407.1,253.9 1407.1,261.2 1402.6,261.9" fill="#bba69f"/>
<polygon points="1402.6,265.2 1407.1,264.4 1407.1,281.3 1402.6,282.1" fill="#a99a98"/>
<polygon points="1414.7,248.0 1421.0,247.1 1421.0,286.5 1414.7,287.8" fill="#2c2f32"/>
<polygon points="1416.1,252.6 1419.4,252.0 1419.4,259.2 1416.1,259.7" fill="#bba69f"/>
<polygon points="1416.1,262.9 1419.4,262.3 1419.4,278.9 1416.1,279.5" fill="#a99a98"/>
<polygon points="1433.5,245.2 1438.2,244.5 1438.2,282.9 1433.5,283.9" fill="#41464c"/>
<polygon points="1443.4,243.8 1449.5,242.9 1449.5,280.6 1443.4,281.9" fill="#2c2f32"/>
<polygon points="1444.8,248.1 1447.9,247.6 1447.9,254.4 1444.8,255.0" fill="#bba69f"/>
<polygon points="1444.8,258.0 1447.9,257.5 1447.9,273.4 1444.8,274.0" fill="#a99a98"/>
<polygon points="1455.3,242.0 1460.0,241.3 1460.0,278.4 1455.3,279.4" fill="#41464c"/>
<line x1="1375.2" y1="253.0" x2="1375.2" y2="296.4" stroke="#a04a28" stroke-width="0.75"/>
<line x1="1396.0" y1="250.0" x2="1396.0" y2="292.1" stroke="#a04a28" stroke-width="0.75"/>
<line x1="1409.5" y1="248.0" x2="1409.5" y2="289.3" stroke="#a04a28" stroke-width="0.75"/>
<line x1="1422.0" y1="246.1" x2="1422.0" y2="286.8" stroke="#a04a28" stroke-width="0.75"/>
<line x1="1432.4" y1="244.6" x2="1432.4" y2="284.6" stroke="#a04a28" stroke-width="0.75"/>
<line x1="1450.0" y1="242.0" x2="1450.0" y2="281.0" stroke="#a04a28" stroke-width="0.75"/>
<polygon points="1524.0,232.3 1530.0,231.4 1530.0,260.9 1524.0,262.0" fill="#2c2f32"/>
<polygon points="1525.4,238.0 1528.5,237.5 1528.5,253.8 1525.4,254.3" fill="#a99a98"/>
<polygon points="1536.0,230.5 1542.0,229.6 1542.0,258.5 1536.0,259.7" fill="#2c2f32"/>
<polygon points="1537.4,236.1 1540.5,235.6 1540.5,251.6 1537.4,252.1" fill="#a99a98"/>
<polygon points="1548.0,228.7 1553.5,227.9 1553.5,256.3 1548.0,257.4" fill="#2c2f32"/>
<polygon points="1549.4,234.2 1552.0,233.8 1552.0,249.5 1549.4,249.9" fill="#a99a98"/>
<polygon points="1559.0,227.1 1564.5,226.3 1564.5,254.1 1559.0,255.2" fill="#2c2f32"/>
<polygon points="1560.4,232.5 1563.0,232.1 1563.0,247.4 1560.4,247.9" fill="#a99a98"/>
<polygon points="1570.0,225.5 1575.0,224.7 1575.0,252.1 1570.0,253.1" fill="#2c2f32"/>
<polygon points="1571.4,230.8 1573.5,230.4 1573.5,245.5 1571.4,245.9" fill="#a99a98"/>
<polygon points="1466.0,240.0 1497.0,236.0 1497.0,263.0 1466.0,278.0" fill="#e57d52"/>
<polygon points="1482.6,237.0 1499.3,234.8 1499.3,274.8 1482.6,274.8" fill="#34383b"/>
<line x1="1466.0" y1="236.0" x2="1466.0" y2="278.0" stroke="#5a2813" stroke-width="0.75"/>
<polygon points="1305.0,200.3 1612.6,182.2 1612.6,186.8 1305.0,208.6" fill="#fbfbf5"/>
<polygon points="1305.0,254.5 1608.4,213.5 1608.4,218.6 1305.0,263.4" fill="#fbfbf5"/>
<rect x="1403.1" y="195.6" width="1" height="1" fill="#d9673a"/>
<rect x="1117.4" y="236.7" width="1" height="1" fill="#d9673a"/>
<rect x="988.4" y="188.5" width="1" height="1" fill="#d9673a"/>
<rect x="1081.6" y="195.6" width="1" height="1" fill="#d9673a"/>
<rect x="1495.1" y="194.8" width="1" height="1" fill="#d9673a"/>
<rect x="1600.8" y="183.1" width="1" height="1" fill="#d9673a"/>
<rect x="1015.7" y="223.4" width="1" height="1" fill="#d9673a"/>
<rect x="1359.8" y="201.5" width="1" height="1" fill="#d9673a"/>
<rect x="1118.0" y="192.9" width="1" height="1" fill="#d9673a"/>
<rect x="1164.9" y="242.7" width="1" height="1" fill="#d9673a"/>
<rect x="1442.3" y="238.1" width="1" height="1" fill="#d9673a"/>
<rect x="1038.8" y="228.8" width="1" height="1" fill="#d9673a"/>
<rect x="1526.0" y="188.9" width="1" height="1" fill="#d9673a"/>
<rect x="1079.8" y="195.1" width="1" height="1" fill="#d9673a"/>
<rect x="1316.9" y="258.7" width="1" height="1" fill="#d9673a"/>
<rect x="1570.3" y="220.4" width="1" height="1" fill="#d9673a"/>
<rect x="1480.7" y="233.8" width="1" height="1" fill="#d9673a"/>
<rect x="1099.1" y="236.6" width="1" height="1" fill="#d9673a"/>
<rect x="1501.1" y="194.7" width="1" height="1" fill="#d9673a"/>
<rect x="1070.8" y="194.1" width="1" height="1" fill="#d9673a"/>
<rect x="1020.9" y="224.0" width="1" height="1" fill="#d9673a"/>
<rect x="1012.5" y="223.7" width="1" height="1" fill="#d9673a"/>
<rect x="1002.3" y="223.7" width="1" height="1" fill="#d9673a"/>
<rect x="1216.2" y="203.2" width="1" height="1" fill="#d9673a"/>
<rect x="1413.7" y="200.1" width="1" height="1" fill="#d9673a"/>
<rect x="1018.3" y="189.0" width="1" height="1" fill="#d9673a"/>
<rect x="1131.3" y="194.8" width="1" height="1" fill="#d9673a"/>
<rect x="1416.9" y="243.6" width="1" height="1" fill="#d9673a"/>
<rect x="1461.2" y="195.1" width="1" height="1" fill="#d9673a"/>
<rect x="1577.6" y="221.9" width="1" height="1" fill="#d9673a"/>
<rect x="1076.1" y="232.1" width="1" height="1" fill="#d9673a"/>
<rect x="993.3" y="187.0" width="1" height="1" fill="#d9673a"/>
<rect x="1058.3" y="190.0" width="1" height="1" fill="#d9673a"/>
<rect x="1006.6" y="223.7" width="1" height="1" fill="#d9673a"/>
<rect x="1139.6" y="194.5" width="1" height="1" fill="#d9673a"/>
<rect x="1415.3" y="240.5" width="1" height="1" fill="#d9673a"/>
<rect x="1093.3" y="194.2" width="1" height="1" fill="#d9673a"/>
<rect x="1408.8" y="196.1" width="1" height="1" fill="#d9673a"/>
<rect x="985.9" y="190.9" width="1" height="1" fill="#d9673a"/>
<rect x="1119.4" y="234.6" width="1" height="1" fill="#d9673a"/>
<rect x="1234.9" y="203.0" width="1" height="1" fill="#d9673a"/>
<rect x="1021.2" y="227.8" width="1" height="1" fill="#d9673a"/>
<rect x="1404.9" y="242.7" width="1" height="1" fill="#d9673a"/>
<rect x="1563.3" y="224.2" width="1" height="1" fill="#d9673a"/>
<rect x="1030.3" y="191.1" width="1" height="1" fill="#d9673a"/>
<rect x="991.4" y="221.5" width="1" height="1" fill="#d9673a"/>
<rect x="1594.8" y="217.7" width="1" height="1" fill="#d9673a"/>
<rect x="1276.7" y="202.7" width="1" height="1" fill="#d9673a"/>
<rect x="1364.6" y="248.1" width="1" height="1" fill="#d9673a"/>
<rect x="1559.7" y="222.8" width="1" height="1" fill="#d9673a"/>
<rect x="1330.7" y="256.7" width="1" height="1" fill="#d9673a"/>
<rect x="1190.4" y="246.1" width="1" height="1" fill="#d9673a"/>
<rect x="1405.8" y="200.0" width="1" height="1" fill="#d9673a"/>
<rect x="1426.6" y="199.6" width="1" height="1" fill="#d9673a"/>
<rect x="1343.5" y="250.6" width="1" height="1" fill="#d9673a"/>
<rect x="1349.3" y="255.4" width="1" height="1" fill="#d9673a"/>
<rect x="1061.3" y="192.9" width="1" height="1" fill="#d9673a"/>
<rect x="1284.7" y="258.8" width="1" height="1" fill="#d9673a"/>
<rect x="1436.4" y="198.4" width="1" height="1" fill="#d9673a"/>
<rect x="1040.4" y="227.2" width="1" height="1" fill="#d9673a"/>
<rect x="1042.3" y="228.2" width="1" height="1" fill="#d9673a"/>
<rect x="1412.2" y="243.5" width="1" height="1" fill="#d9673a"/>
<rect x="1084.1" y="236.4" width="1" height="1" fill="#d9673a"/>
<rect x="1110.4" y="192.3" width="1" height="1" fill="#d9673a"/>
<rect x="981.9" y="190.0" width="1" height="1" fill="#d9673a"/>
<rect x="1181.1" y="245.6" width="1" height="1" fill="#d9673a"/>
<rect x="1123.6" y="240.3" width="1" height="1" fill="#d9673a"/>
<rect x="1380.3" y="246.5" width="1" height="1" fill="#d9673a"/>
<rect x="1475.2" y="195.0" width="1" height="1" fill="#d9673a"/>
<rect x="1141.8" y="240.6" width="1" height="1" fill="#d9673a"/>
<rect x="1092.8" y="234.9" width="1" height="1" fill="#d9673a"/>
<rect x="1516.9" y="192.9" width="1" height="1" fill="#d9673a"/>
<rect x="1474.5" y="196.2" width="1" height="1" fill="#d9673a"/>
<rect x="1006.3" y="189.5" width="1" height="1" fill="#d9673a"/>
<rect x="1327.2" y="257.3" width="1" height="1" fill="#d9673a"/>
<rect x="1351.8" y="203.1" width="1" height="1" fill="#d9673a"/>
<rect x="1244.4" y="256.6" width="1" height="1" fill="#d9673a"/>
<rect x="1425.7" y="241.8" width="1" height="1" fill="#d9673a"/>
<rect x="1015.1" y="189.9" width="1" height="1" fill="#d9673a"/>
<rect x="1364.3" y="199.2" width="1" height="1" fill="#d9673a"/>
<rect x="1120.1" y="195.3" width="1" height="1" fill="#d9673a"/>
<rect x="1145.6" y="241.0" width="1" height="1" fill="#d9673a"/>
<rect x="1203.7" y="203.3" width="1" height="1" fill="#d9673a"/>
<rect x="989.1" y="190.3" width="1" height="1" fill="#d9673a"/>
<rect x="1432.9" y="198.9" width="1" height="1" fill="#d9673a"/>
<rect x="1350.3" y="256.0" width="1" height="1" fill="#d9673a"/>
<rect x="1332.1" y="199.2" width="1" height="1" fill="#d9673a"/>
<rect x="1326.9" y="259.6" width="1" height="1" fill="#d9673a"/>
<rect x="1003.3" y="226.1" width="1" height="1" fill="#d9673a"/>
<rect x="1442.5" y="238.4" width="1" height="1" fill="#d9673a"/>
<rect x="1040.0" y="189.5" width="1" height="1" fill="#d9673a"/>
<rect x="1003.4" y="187.9" width="1" height="1" fill="#d9673a"/>
<rect x="1399.5" y="196.9" width="1" height="1" fill="#d9673a"/>
<rect x="1103.3" y="192.9" width="1" height="1" fill="#d9673a"/>
<rect x="1380.9" y="244.4" width="1" height="1" fill="#d9673a"/>
<rect x="1362.4" y="200.5" width="1" height="1" fill="#d9673a"/>
<rect x="1217.4" y="248.9" width="1" height="1" fill="#d9673a"/>
<rect x="1424.1" y="242.2" width="1" height="1" fill="#d9673a"/>
<rect x="1408.8" y="246.8" width="1" height="1" fill="#d9673a"/>
<rect x="1075.8" y="192.5" width="1" height="1" fill="#d9673a"/>
<rect x="995.6" y="190.4" width="1" height="1" fill="#d9673a"/>
<rect x="1330.6" y="258.3" width="1" height="1" fill="#d9673a"/>
<rect x="1043.6" y="190.3" width="1" height="1" fill="#d9673a"/>
<rect x="1018.8" y="225.6" width="1" height="1" fill="#d9673a"/>
<rect x="1285.5" y="258.0" width="1" height="1" fill="#d9673a"/>
<rect x="1050.6" y="191.3" width="1" height="1" fill="#d9673a"/>
<rect x="1099.2" y="235.5" width="1" height="1" fill="#d9673a"/>
<rect x="981.7" y="187.4" width="1" height="1" fill="#d9673a"/>
<rect x="989.0" y="186.6" width="1" height="1" fill="#d9673a"/>
<rect x="1482.4" y="234.1" width="1" height="1" fill="#d9673a"/>
<rect x="1175.8" y="201.1" width="1" height="1" fill="#d9673a"/>
<rect x="1603.4" y="215.0" width="1" height="1" fill="#d9673a"/>
<rect x="1318.3" y="260.0" width="1" height="1" fill="#d9673a"/>
<rect x="1184.4" y="247.9" width="1" height="1" fill="#d9673a"/>
<rect x="1457.8" y="239.7" width="1" height="1" fill="#d9673a"/>
<rect x="1482.0" y="236.6" width="1" height="1" fill="#d9673a"/>
<rect x="1030.7" y="188.6" width="1" height="1" fill="#d9673a"/>
<rect x="1336.8" y="257.3" width="1" height="1" fill="#d9673a"/>
<rect x="1143.9" y="198.1" width="1" height="1" fill="#d9673a"/>
<rect x="1208.9" y="250.4" width="1" height="1" fill="#d9673a"/>
<rect x="1504.8" y="188.9" width="1" height="1" fill="#d9673a"/>
<rect x="1327.6" y="201.1" width="1" height="1" fill="#d9673a"/>
<rect x="1184.8" y="202.3" width="1" height="1" fill="#d9673a"/>
<rect x="1450.1" y="239.7" width="1" height="1" fill="#d9673a"/>
<rect x="1149.3" y="194.5" width="1" height="1" fill="#d9673a"/>
<rect x="1530.2" y="188.8" width="1" height="1" fill="#d9673a"/>
<rect x="1323.4" y="254.3" width="1" height="1" fill="#d9673a"/>
<rect x="1161.0" y="196.4" width="1" height="1" fill="#d9673a"/>
<rect x="1446.3" y="192.8" width="1" height="1" fill="#d9673a"/>
<rect x="1288.0" y="207.8" width="1" height="1" fill="#d9673a"/>
<rect x="1216.5" y="204.0" width="1" height="1" fill="#d9673a"/>
<rect x="1031.0" y="230.0" width="1" height="1" fill="#d9673a"/>
<rect x="1347.9" y="201.9" width="1" height="1" fill="#d9673a"/>
<rect x="1553.5" y="223.9" width="1" height="1" fill="#d9673a"/>
<rect x="1031.6" y="193.2" width="1" height="1" fill="#d9673a"/>
<rect x="981.6" y="188.5" width="1" height="1" fill="#d9673a"/>
<rect x="1015.1" y="224.6" width="1" height="1" fill="#d9673a"/>
<rect x="1305.5" y="206.5" width="1" height="1" fill="#d9673a"/>
<rect x="1585.7" y="187.3" width="1" height="1" fill="#d9673a"/>
<rect x="1417.8" y="242.2" width="1" height="1" fill="#d9673a"/>
<rect x="1063.9" y="192.4" width="1" height="1" fill="#d9673a"/>
<rect x="1007.1" y="226.4" width="1" height="1" fill="#d9673a"/>
<rect x="1035.6" y="190.1" width="1" height="1" fill="#d9673a"/>
<rect x="1418.1" y="246.4" width="1" height="1" fill="#d9673a"/>
<rect x="1496.2" y="234.6" width="1" height="1" fill="#d9673a"/>
<rect x="1523.0" y="187.8" width="1" height="1" fill="#d9673a"/>
<rect x="1189.6" y="200.3" width="1" height="1" fill="#d9673a"/>
<rect x="1263.4" y="200.3" width="1" height="1" fill="#d9673a"/>
<rect x="1395.2" y="200.3" width="1" height="1" fill="#d9673a"/>
<rect x="1503.8" y="190.4" width="1" height="1" fill="#d9673a"/>
<rect x="1020.8" y="224.2" width="1" height="1" fill="#d9673a"/>
<rect x="1455.6" y="235.7" width="1" height="1" fill="#d9673a"/>
<rect x="1088.5" y="191.9" width="1" height="1" fill="#d9673a"/>
<rect x="1058.8" y="190.2" width="1" height="1" fill="#d9673a"/>
<rect x="1477.6" y="195.7" width="1" height="1" fill="#d9673a"/>
<rect x="1078.5" y="193.7" width="1" height="1" fill="#d9673a"/>
<rect x="1323.8" y="201.4" width="1" height="1" fill="#d9673a"/>
<rect x="1457.5" y="195.4" width="1" height="1" fill="#d9673a"/>
<rect x="1040.9" y="190.2" width="1" height="1" fill="#d9673a"/>
<rect x="1594.0" y="187.4" width="1" height="1" fill="#d9673a"/>
<rect x="1314.8" y="205.5" width="1" height="1" fill="#d9673a"/>
<rect x="1133.3" y="236.0" width="1" height="1" fill="#d9673a"/>
<rect x="1555.2" y="190.1" width="1" height="1" fill="#d9673a"/>
<rect x="1008.1" y="222.7" width="1" height="1" fill="#d9673a"/>
<rect x="1590.3" y="219.8" width="1" height="1" fill="#d9673a"/>
<rect x="1094.2" y="235.2" width="1" height="1" fill="#d9673a"/>
<rect x="1375.5" y="203.0" width="1" height="1" fill="#d9673a"/>
<rect x="1343.8" y="251.4" width="1" height="1" fill="#d9673a"/>
<rect x="1008.7" y="222.3" width="1" height="1" fill="#d9673a"/>
<rect x="1422.6" y="194.9" width="1" height="1" fill="#d9673a"/>
<polygon points="1337.4,249.9 1349.0,246.0 1395.0,242.0 1395.0,252.6 1349.5,258.6 1337.4,259.3" fill="#34383c" stroke="#1c1e20" stroke-width="0.75"/>
<polygon points="1337.4,249.9 1349.0,248.6 1349.5,258.6 1337.4,259.3" fill="#2a2d30"/>
<polygon points="1540.8,222.5 1574.0,218.6 1574.0,224.6 1545.0,228.4 1540.8,228.0" fill="#3a3e42" stroke="#1c1e20" stroke-width="0.75"/>
<polygon points="991.0,254.3 1301.0,311.2 1301.0,354.9 995.0,283.0" fill="#3b3e41" stroke="#1d1f20" stroke-width="0.8999999999999999"/>
<polygon points="991.6,258.0 1301.0,318.0 1301.0,340.0 994.0,275.0" fill="#3f4245"/>
<line x1="994.4" y1="277.0" x2="1301.0" y2="343.5" stroke="#2a2c2e" stroke-width="0.6"/>
<line x1="992.1" y1="261.4" x2="1301.0" y2="322.4" stroke="#505356" stroke-width="0.35"/>
<line x1="992.6" y1="264.8" x2="1301.0" y2="326.8" stroke="#505356" stroke-width="0.35"/>
<line x1="993.0" y1="268.2" x2="1301.0" y2="331.2" stroke="#505356" stroke-width="0.35"/>
<line x1="993.5" y1="271.6" x2="1301.0" y2="335.6" stroke="#505356" stroke-width="0.35"/>
<line x1="1086.5" y1="283.2" x2="1086.8" y2="287.1" stroke="#505356" stroke-width="0.35"/>
<line x1="1283.7" y1="325.9" x2="1284.0" y2="330.7" stroke="#505356" stroke-width="0.35"/>
<line x1="1261.1" y1="318.4" x2="1261.4" y2="323.1" stroke="#505356" stroke-width="0.35"/>
<line x1="1066.4" y1="276.1" x2="1066.7" y2="279.9" stroke="#505356" stroke-width="0.35"/>
<line x1="1284.2" y1="327.0" x2="1284.5" y2="331.9" stroke="#505356" stroke-width="0.35"/>
<line x1="1088.2" y1="277.1" x2="1088.5" y2="280.9" stroke="#505356" stroke-width="0.35"/>
<line x1="1145.5" y1="298.4" x2="1145.8" y2="302.5" stroke="#505356" stroke-width="0.35"/>
<line x1="1122.0" y1="287.2" x2="1122.3" y2="291.2" stroke="#505356" stroke-width="0.35"/>
<line x1="1196.2" y1="312.7" x2="1196.5" y2="317.1" stroke="#505356" stroke-width="0.35"/>
<line x1="1064.0" y1="272.5" x2="1064.3" y2="276.3" stroke="#505356" stroke-width="0.35"/>
<line x1="1097.4" y1="284.8" x2="1097.7" y2="288.7" stroke="#505356" stroke-width="0.35"/>
<line x1="1200.8" y1="301.8" x2="1201.1" y2="306.2" stroke="#505356" stroke-width="0.35"/>
<line x1="1235.1" y1="317.6" x2="1235.4" y2="322.2" stroke="#505356" stroke-width="0.35"/>
<line x1="1147.5" y1="291.4" x2="1147.8" y2="295.6" stroke="#505356" stroke-width="0.35"/>
<line x1="1287.0" y1="320.7" x2="1287.3" y2="325.6" stroke="#505356" stroke-width="0.35"/>
<line x1="1242.0" y1="310.5" x2="1242.3" y2="315.1" stroke="#505356" stroke-width="0.35"/>
<line x1="1062.4" y1="282.8" x2="1062.7" y2="286.5" stroke="#505356" stroke-width="0.35"/>
<line x1="1084.5" y1="290.1" x2="1084.8" y2="293.9" stroke="#505356" stroke-width="0.35"/>
<line x1="1144.7" y1="290.6" x2="1145.0" y2="294.8" stroke="#505356" stroke-width="0.35"/>
<line x1="1063.0" y1="277.9" x2="1063.3" y2="281.6" stroke="#505356" stroke-width="0.35"/>
<line x1="1195.6" y1="313.0" x2="1195.9" y2="317.4" stroke="#505356" stroke-width="0.35"/>
<line x1="1039.9" y1="273.0" x2="1040.2" y2="276.6" stroke="#505356" stroke-width="0.35"/>
<line x1="1059.9" y1="285.3" x2="1060.2" y2="289.0" stroke="#505356" stroke-width="0.35"/>
<line x1="1038.6" y1="267.8" x2="1038.9" y2="271.5" stroke="#505356" stroke-width="0.35"/>
<line x1="1014.0" y1="267.8" x2="1014.3" y2="271.3" stroke="#505356" stroke-width="0.35"/>
<line x1="1265.5" y1="326.3" x2="1265.8" y2="331.0" stroke="#505356" stroke-width="0.35"/>
<line x1="1215.8" y1="318.0" x2="1216.1" y2="322.5" stroke="#505356" stroke-width="0.35"/>
<line x1="1275.5" y1="318.8" x2="1275.8" y2="323.6" stroke="#505356" stroke-width="0.35"/>
<line x1="1051.7" y1="283.1" x2="1052.0" y2="286.7" stroke="#505356" stroke-width="0.35"/>
<line x1="1219.9" y1="302.8" x2="1220.2" y2="307.3" stroke="#505356" stroke-width="0.35"/>
<line x1="1195.3" y1="303.7" x2="1195.6" y2="308.1" stroke="#505356" stroke-width="0.35"/>
<line x1="1108.2" y1="285.6" x2="1108.5" y2="289.6" stroke="#505356" stroke-width="0.35"/>
<line x1="1046.8" y1="268.7" x2="1047.1" y2="272.4" stroke="#505356" stroke-width="0.35"/>
<line x1="1079.9" y1="280.3" x2="1080.2" y2="284.1" stroke="#505356" stroke-width="0.35"/>
<line x1="1282.7" y1="316.6" x2="1283.0" y2="321.4" stroke="#505356" stroke-width="0.35"/>
<line x1="1285.3" y1="318.6" x2="1285.6" y2="323.4" stroke="#505356" stroke-width="0.35"/>
<line x1="1103.0" y1="291.9" x2="1103.3" y2="295.9" stroke="#505356" stroke-width="0.35"/>
<line x1="1242.6" y1="314.0" x2="1242.9" y2="318.6" stroke="#505356" stroke-width="0.35"/>
<line x1="1010.8" y1="268.3" x2="1011.1" y2="271.7" stroke="#505356" stroke-width="0.35"/>
<line x1="1107.8" y1="294.4" x2="1108.1" y2="298.4" stroke="#505356" stroke-width="0.35"/>
<line x1="1053.9" y1="275.3" x2="1054.2" y2="279.0" stroke="#505356" stroke-width="0.35"/>
<line x1="1265.1" y1="311.6" x2="1265.4" y2="316.3" stroke="#505356" stroke-width="0.35"/>
<line x1="1119.2" y1="295.1" x2="1119.5" y2="299.1" stroke="#505356" stroke-width="0.35"/>
<line x1="1226.0" y1="304.1" x2="1226.3" y2="308.7" stroke="#505356" stroke-width="0.35"/>
<line x1="1006.5" y1="261.7" x2="1006.8" y2="265.2" stroke="#505356" stroke-width="0.35"/>
<line x1="1272.0" y1="316.8" x2="1272.3" y2="321.6" stroke="#505356" stroke-width="0.35"/>
<line x1="1220.2" y1="317.2" x2="1220.5" y2="321.8" stroke="#505356" stroke-width="0.35"/>
<line x1="1097.7" y1="282.7" x2="1098.0" y2="286.6" stroke="#505356" stroke-width="0.35"/>
<line x1="1283.3" y1="325.3" x2="1283.6" y2="330.2" stroke="#505356" stroke-width="0.35"/>
<line x1="1074.7" y1="284.6" x2="1075.0" y2="288.4" stroke="#505356" stroke-width="0.35"/>
<line x1="1090.9" y1="281.4" x2="1091.2" y2="285.2" stroke="#505356" stroke-width="0.35"/>
<line x1="997.1" y1="269.4" x2="997.4" y2="272.8" stroke="#505356" stroke-width="0.35"/>
<line x1="1270.9" y1="323.1" x2="1271.2" y2="327.9" stroke="#505356" stroke-width="0.35"/>
<line x1="1279.0" y1="314.2" x2="1279.3" y2="319.0" stroke="#505356" stroke-width="0.35"/>
<line x1="1066.2" y1="279.4" x2="1066.5" y2="283.1" stroke="#505356" stroke-width="0.35"/>
<line x1="1283.0" y1="331.1" x2="1283.3" y2="336.0" stroke="#505356" stroke-width="0.35"/>
<line x1="1112.0" y1="285.1" x2="1112.3" y2="289.1" stroke="#505356" stroke-width="0.35"/>
<line x1="1125.0" y1="291.4" x2="1125.3" y2="295.5" stroke="#505356" stroke-width="0.35"/>
<line x1="1274.4" y1="316.0" x2="1274.7" y2="320.8" stroke="#505356" stroke-width="0.35"/>
<line x1="1236.8" y1="318.0" x2="1237.1" y2="322.6" stroke="#505356" stroke-width="0.35"/>
<ellipse cx="1176" cy="300" rx="2.4" ry="2.8" fill="#141516"/>
<ellipse cx="1194" cy="304" rx="2.4" ry="2.8" fill="#141516"/>
<ellipse cx="1227" cy="311" rx="2.4" ry="2.8" fill="#141516"/>
<ellipse cx="1286" cy="323" rx="2.4" ry="2.8" fill="#141516"/>
<polygon points="1012.0,262.0 1018.0,256.0 1036.0,255.0 1042.0,260.0 1036.0,265.0 1024.0,270.0 1013.0,269.0" fill="#5d5e5f"/>
<line x1="1024.0" y1="270.0" x2="1032.0" y2="264.6" stroke="#c8c8c8" stroke-width="0.8"/>
<line x1="1032.0" y1="264.6" x2="1042.0" y2="262.6" stroke="#c8c8c8" stroke-width="0.8"/>
<polygon points="1303.0,311.2 1464.6,278.0 1464.6,313.3 1303.0,354.9" fill="#484c50" stroke="#1d1f20" stroke-width="0.8999999999999999"/>
<polygon points="1301.0,311.2 1303.0,311.2 1303.0,354.9 1301.0,354.9" fill="#2f3235"/>
<line x1="1303.0" y1="319.9" x2="1464.6" y2="285.1" stroke="#5a5e62" stroke-width="0.3"/>
<line x1="1303.0" y1="328.7" x2="1464.6" y2="292.1" stroke="#5a5e62" stroke-width="0.3"/>
<line x1="1303.0" y1="337.4" x2="1464.6" y2="299.2" stroke="#5a5e62" stroke-width="0.3"/>
<line x1="1303.0" y1="346.2" x2="1464.6" y2="306.2" stroke="#5a5e62" stroke-width="0.3"/>
<rect x="1329" y="314.5" width="4.6" height="5.2" rx="1" fill="#151617"/>
<polygon points="1347.2,319.5 1376.3,288.4 1390.8,288.4 1390.8,303.5 1377.0,304.5 1361.7,321.6" fill="#808182"/>
<polygon points="1376.3,288.4 1390.8,288.4 1390.8,303.5 1377.0,304.5" fill="#5c5e60"/>
<line x1="1347.2" y1="319.5" x2="1361.7" y2="321.6" stroke="#b5b5b5" stroke-width="0.5"/>
<line x1="1350.7" y1="315.7" x2="1363.9" y2="319.2" stroke="#b5b5b5" stroke-width="0.5"/>
<line x1="1354.3" y1="311.9" x2="1366.1" y2="316.7" stroke="#b5b5b5" stroke-width="0.5"/>
<line x1="1357.8" y1="308.1" x2="1368.3" y2="314.3" stroke="#b5b5b5" stroke-width="0.5"/>
<line x1="1361.4" y1="304.4" x2="1370.4" y2="311.8" stroke="#b5b5b5" stroke-width="0.5"/>
<line x1="1364.9" y1="300.6" x2="1372.6" y2="309.4" stroke="#b5b5b5" stroke-width="0.5"/>
<line x1="1368.5" y1="296.8" x2="1374.8" y2="306.9" stroke="#b5b5b5" stroke-width="0.5"/>
<line x1="1361.7" y1="321.6" x2="1377.0" y2="304.5" stroke="#e8e8e8" stroke-width="0.8"/>
<line x1="1377.0" y1="304.5" x2="1390.8" y2="303.5" stroke="#e8e8e8" stroke-width="0.9"/>
<polygon points="1466.0,262.0 1482.6,259.0 1497.2,259.5 1497.2,293.6 1482.0,296.0 1466.0,292.0" fill="#2e3133"/>
<rect x="1491.0" y="285.4" width="0.9" height="0.9" fill="#d8d8d8"/>
<rect x="1485.0" y="272.5" width="0.9" height="0.9" fill="#d8d8d8"/>
<rect x="1476.9" y="273.5" width="0.9" height="0.9" fill="#d8d8d8"/>
<rect x="1489.9" y="265.3" width="0.9" height="0.9" fill="#d8d8d8"/>
<rect x="1473.5" y="284.8" width="0.9" height="0.9" fill="#d8d8d8"/>
<rect x="1474.9" y="264.9" width="0.9" height="0.9" fill="#d8d8d8"/>
<rect x="1468.9" y="279.0" width="0.9" height="0.9" fill="#d8d8d8"/>
<rect x="1477.1" y="291.4" width="0.9" height="0.9" fill="#d8d8d8"/>
<rect x="1492.7" y="291.6" width="0.9" height="0.9" fill="#d8d8d8"/>
<rect x="1475.4" y="265.4" width="0.9" height="0.9" fill="#d8d8d8"/>
<rect x="1470.7" y="277.5" width="0.9" height="0.9" fill="#d8d8d8"/>
<rect x="1487.9" y="276.0" width="0.9" height="0.9" fill="#d8d8d8"/>
<rect x="1474.6" y="275.1" width="0.9" height="0.9" fill="#d8d8d8"/>
<rect x="1485.4" y="282.5" width="0.9" height="0.9" fill="#d8d8d8"/>
<rect x="1488.9" y="287.6" width="0.9" height="0.9" fill="#d8d8d8"/>
<rect x="1486.6" y="266.5" width="0.9" height="0.9" fill="#d8d8d8"/>
<rect x="1491.5" y="271.5" width="0.9" height="0.9" fill="#d8d8d8"/>
<rect x="1483.9" y="273.8" width="0.9" height="0.9" fill="#d8d8d8"/>
<rect x="1488.7" y="268.8" width="0.9" height="0.9" fill="#d8d8d8"/>
<rect x="1474.9" y="270.1" width="0.9" height="0.9" fill="#d8d8d8"/>
<rect x="1472.3" y="288.6" width="0.9" height="0.9" fill="#d8d8d8"/>
<rect x="1484.2" y="272.5" width="0.9" height="0.9" fill="#d8d8d8"/>
<rect x="1479.1" y="291.8" width="0.9" height="0.9" fill="#d8d8d8"/>
<rect x="1482.2" y="269.7" width="0.9" height="0.9" fill="#d8d8d8"/>
<rect x="1490.6" y="281.9" width="0.9" height="0.9" fill="#d8d8d8"/>
<rect x="1495.7" y="266.0" width="0.9" height="0.9" fill="#d8d8d8"/>
<rect x="1481.3" y="286.8" width="0.9" height="0.9" fill="#d8d8d8"/>
<rect x="1491.5" y="289.5" width="0.9" height="0.9" fill="#d8d8d8"/>
<rect x="1469.1" y="271.5" width="0.9" height="0.9" fill="#d8d8d8"/>
<rect x="1471.3" y="268.5" width="0.9" height="0.9" fill="#d8d8d8"/>
<rect x="1495.2" y="279.9" width="0.9" height="0.9" fill="#d8d8d8"/>
<rect x="1494.0" y="273.8" width="0.9" height="0.9" fill="#d8d8d8"/>
<rect x="1492.3" y="276.0" width="0.9" height="0.9" fill="#d8d8d8"/>
<rect x="1475.3" y="285.6" width="0.9" height="0.9" fill="#d8d8d8"/>
<rect x="1494.5" y="266.1" width="0.9" height="0.9" fill="#d8d8d8"/>
<rect x="1484.7" y="281.0" width="0.9" height="0.9" fill="#d8d8d8"/>
<rect x="1474.1" y="273.7" width="0.9" height="0.9" fill="#d8d8d8"/>
<rect x="1472.0" y="268.9" width="0.9" height="0.9" fill="#d8d8d8"/>
<rect x="1475.1" y="280.4" width="0.9" height="0.9" fill="#d8d8d8"/>
<rect x="1486.2" y="268.9" width="0.9" height="0.9" fill="#d8d8d8"/>
<polygon points="1481.2,274.8 1497.2,274.8 1497.2,296.7 1481.2,296.7" fill="#e9e9e6"/>
<rect x="1482.2" y="282.2" width="1.3" height="1.5" fill="#2a2a2a"/>
<rect x="1491.2" y="279.5" width="1.3" height="1.5" fill="#2a2a2a"/>
<rect x="1486.2" y="279.9" width="1.3" height="1.5" fill="#2a2a2a"/>
<rect x="1492.7" y="286.4" width="1.3" height="1.5" fill="#2a2a2a"/>
<rect x="1482.9" y="277.9" width="1.3" height="1.5" fill="#2a2a2a"/>
<rect x="1487.3" y="286.5" width="1.3" height="1.5" fill="#2a2a2a"/>
<rect x="1490.6" y="277.7" width="1.3" height="1.5" fill="#2a2a2a"/>
<rect x="1484.2" y="289.2" width="1.3" height="1.5" fill="#2a2a2a"/>
<rect x="1487.5" y="281.4" width="1.3" height="1.5" fill="#2a2a2a"/>
<rect x="1486.2" y="294.1" width="1.3" height="1.5" fill="#2a2a2a"/>
<rect x="1486.2" y="286.8" width="1.3" height="1.5" fill="#2a2a2a"/>
<rect x="1486.8" y="283.9" width="1.3" height="1.5" fill="#2a2a2a"/>
<rect x="1493.7" y="294.9" width="1.3" height="1.5" fill="#2a2a2a"/>
<rect x="1486.9" y="279.7" width="1.3" height="1.5" fill="#2a2a2a"/>
<rect x="1491.8" y="279.9" width="1.3" height="1.5" fill="#2a2a2a"/>
<rect x="1482.1" y="293.1" width="1.3" height="1.5" fill="#2a2a2a"/>
<rect x="1487.7" y="291.6" width="1.3" height="1.5" fill="#2a2a2a"/>
<rect x="1487.5" y="292.8" width="1.3" height="1.5" fill="#2a2a2a"/>
<rect x="1488.2" y="279.1" width="1.3" height="1.5" fill="#2a2a2a"/>
<rect x="1482.2" y="286.5" width="1.3" height="1.5" fill="#2a2a2a"/>
<rect x="1490.6" y="293.3" width="1.3" height="1.5" fill="#2a2a2a"/>
<rect x="1483.2" y="287.8" width="1.3" height="1.5" fill="#2a2a2a"/>
<rect x="1487.0" y="285.6" width="1.3" height="1.5" fill="#2a2a2a"/>
<rect x="1484.0" y="281.4" width="1.3" height="1.5" fill="#2a2a2a"/>
<rect x="1489.0" y="293.6" width="1.3" height="1.5" fill="#2a2a2a"/>
<rect x="1483.5" y="285.3" width="1.3" height="1.5" fill="#2a2a2a"/>
<polygon points="1475.3,296.7 1502.4,296.7 1502.4,300.8 1475.3,300.8" fill="#efefec"/>
<polygon points="1466.0,290.0 1472.0,290.0 1472.0,303.0 1466.0,303.0" fill="#e4e4e0"/>
<polygon points="1497.2,263.4 1520.0,263.4 1520.0,294.6 1497.2,293.6" fill="#2f3235"/>
<rect x="1514.9" y="291.1" width="0.9" height="0.9" fill="#cfcfcf"/>
<rect x="1502.1" y="269.3" width="0.9" height="0.9" fill="#cfcfcf"/>
<rect x="1517.8" y="291.4" width="0.9" height="0.9" fill="#cfcfcf"/>
<rect x="1508.1" y="267.4" width="0.9" height="0.9" fill="#cfcfcf"/>
<rect x="1517.4" y="276.1" width="0.9" height="0.9" fill="#cfcfcf"/>
<rect x="1517.0" y="282.1" width="0.9" height="0.9" fill="#cfcfcf"/>
<rect x="1515.3" y="270.2" width="0.9" height="0.9" fill="#cfcfcf"/>
<rect x="1514.5" y="271.8" width="0.9" height="0.9" fill="#cfcfcf"/>
<rect x="1506.5" y="288.0" width="0.9" height="0.9" fill="#cfcfcf"/>
<rect x="1515.4" y="270.8" width="0.9" height="0.9" fill="#cfcfcf"/>
<rect x="1502.6" y="276.4" width="0.9" height="0.9" fill="#cfcfcf"/>
<rect x="1508.9" y="276.0" width="0.9" height="0.9" fill="#cfcfcf"/>
<rect x="1500.6" y="272.4" width="0.9" height="0.9" fill="#cfcfcf"/>
<rect x="1513.2" y="289.3" width="0.9" height="0.9" fill="#cfcfcf"/>
<rect x="1498.9" y="280.6" width="0.9" height="0.9" fill="#cfcfcf"/>
<rect x="1513.9" y="267.0" width="0.9" height="0.9" fill="#cfcfcf"/>
<rect x="1515.6" y="269.1" width="0.9" height="0.9" fill="#cfcfcf"/>
<rect x="1510.6" y="280.3" width="0.9" height="0.9" fill="#cfcfcf"/>
<rect x="1511.2" y="274.0" width="0.9" height="0.9" fill="#cfcfcf"/>
<rect x="1506.8" y="281.1" width="0.9" height="0.9" fill="#cfcfcf"/>
<rect x="1506.9" y="283.1" width="0.9" height="0.9" fill="#cfcfcf"/>
<rect x="1507.4" y="277.4" width="0.9" height="0.9" fill="#cfcfcf"/>
<rect x="1498.5" y="282.1" width="0.9" height="0.9" fill="#cfcfcf"/>
<rect x="1508.3" y="272.1" width="0.9" height="0.9" fill="#cfcfcf"/>
<rect x="1514.0" y="286.3" width="0.9" height="0.9" fill="#cfcfcf"/>
<rect x="1507.6" y="270.7" width="0.9" height="0.9" fill="#cfcfcf"/>
<rect x="1507.9" y="268.8" width="0.9" height="0.9" fill="#cfcfcf"/>
<rect x="1500.7" y="277.2" width="0.9" height="0.9" fill="#cfcfcf"/>
<rect x="1499.9" y="277.5" width="0.9" height="0.9" fill="#cfcfcf"/>
<rect x="1508.7" y="267.1" width="0.9" height="0.9" fill="#cfcfcf"/>
<rect x="1511.4" y="268.1" width="0.9" height="0.9" fill="#cfcfcf"/>
<rect x="1513.4" y="286.2" width="0.9" height="0.9" fill="#cfcfcf"/>
<rect x="1508.7" y="267.4" width="0.9" height="0.9" fill="#cfcfcf"/>
<rect x="1508.6" y="275.8" width="0.9" height="0.9" fill="#cfcfcf"/>
<rect x="1518.0" y="269.5" width="0.9" height="0.9" fill="#cfcfcf"/>
<rect x="1516.0" y="291.9" width="0.9" height="0.9" fill="#cfcfcf"/>
<rect x="1513.4" y="287.2" width="0.9" height="0.9" fill="#cfcfcf"/>
<rect x="1502.1" y="291.5" width="0.9" height="0.9" fill="#cfcfcf"/>
<rect x="1508.3" y="290.9" width="0.9" height="0.9" fill="#cfcfcf"/>
<rect x="1517.2" y="270.3" width="0.9" height="0.9" fill="#cfcfcf"/>
<polygon points="1520.0,263.4 1605.3,246.8 1605.3,271.7 1520.0,294.6" fill="#4a4e52" stroke="#1d1f20" stroke-width="0.8999999999999999"/>
<polygon points="1545.0,266.0 1557.0,249.0 1572.0,248.6 1572.0,256.0 1566.0,258.0 1556.0,268.0" fill="#77797b"/>
<ellipse cx="1539" cy="269" rx="1.9" ry="2.3" fill="#141516"/>
<ellipse cx="1592" cy="256.5" rx="1.7" ry="2" fill="#141516"/>
<line x1="1605.3" y1="246.8" x2="1616.7" y2="143.6" stroke="#5a2813" stroke-width="0.8999999999999999"/>
<line x1="1247.0" y1="228.5" x2="1247.0" y2="217.0" stroke="#0000ff" stroke-width="1.2"/>
<line x1="1247.0" y1="228.5" x2="1237.0" y2="230.0" stroke="#ff0000" stroke-width="1.1"/>
<line x1="1247.0" y1="228.5" x2="1257.0" y2="229.5" stroke="#00e000" stroke-width="1.2"/>
<line x1="991.0" y1="295.0" x2="991.0" y2="274.0" stroke="#0000ff" stroke-width="2.2"/>
<polygon points="987.6,276.5 994.4,276.5 991.0,268.6" fill="#0000ff"/>
<line x1="989.0" y1="296.5" x2="975.0" y2="301.5" stroke="#ff0000" stroke-width="1.8"/>
<polygon points="977.5,297.6 979.6,304.0 969.8,303.4" fill="#ff0000"/>
<line x1="994.0" y1="297.0" x2="1008.0" y2="301.0" stroke="#00e800" stroke-width="1.8"/>
<polygon points="1006.4,297.8 1005.0,304.2 1015.2,302.8" fill="#00e800"/>
<circle cx="991.1" cy="295.8" r="4.7" fill="url(#sg)"/>
<text x="990.6" y="262.5" font-family="Liberation Sans, sans-serif" font-size="10" font-weight="bold" fill="#0000ff">Z</text>
<text x="962.8" y="306.6" font-family="Liberation Sans, sans-serif" font-size="10" fill="#ff0000">X</text>
<text x="1021.4" y="305" font-family="Liberation Sans, sans-serif" font-size="10" fill="#00d800">Y</text>
</svg>
<!--/BLD-->
<div class="abs" style="left:941px;top:38px;width:32px;height:32px;background:#535353"></div>
<svg style="left:0;top:0" width="1831" height="200" viewBox="0 0 1831 200" fill="none">
<path d="M945.8 50.4 V42.8 H953.6 M960.6 42.8 H968.4 V50.4 M968.4 57.8 V65.3 H960.6 M953.6 65.3 H945.8 V57.8" stroke="#e8e8e8" stroke-width="1.6"/>
<path d="M957 47 L963 50.5 V57.5 L957 61 L951 57.5 V50.5 Z" fill="#dedede"/>
<!-- view cube -->
<g stroke="#3a3a3a" stroke-width="0.8" stroke-linejoin="round">
<path d="M1680.2 87.5 L1717.4 82.2 L1758.7 87.1 L1722.9 94.1 Z" fill="#fdfdfd"/>
<path d="M1680.2 87.5 L1722.9 94.1 L1722.6 158.2 L1685.1 136.6 Z" fill="#fff"/>
<path d="M1722.9 94.1 L1758.7 87.1 L1754.1 135.6 L1722.6 158.2 Z" fill="#fdfdfd"/>
</g>
<text transform="matrix(0.47 0.165 0 1 1689 123.6)" font-family="Liberation Sans, sans-serif" font-size="16" fill="#9a9a9a">Справа</text>
<text transform="matrix(0.42 -0.2 0 1 1731.6 131.5)" font-family="Liberation Sans, sans-serif" font-size="17" font-style="italic" fill="#9a9a9a">Сзади</text>
</svg>
</div>
<!-- COLLISIONS -->
<div id="coll">
<div class="abs" style="left:941px;top:426px;width:846px;height:37px;background:#535353;border-radius:3px 3px 0 0"></div>
<div class="abs" style="left:1364px;top:432px;width:42px;height:3px;background:#3b93af"></div>
<div class="abs" id="ctitle" style="letter-spacing:-0.08px;left:985px;top:439px;font-size:14.5px;color:#e6e6e6;white-space:nowrap">Коллизии (количество: 0)</div>
<div class="abs" style="left:941px;top:463px;width:846px;height:31.6px;background:#666;border-bottom:1px solid #4a4a4a"></div>
<div class="abs" style="left:941px;top:463px;width:60px;height:31.6px;background:#fff;border-bottom:1px solid #ddd"></div>
<div class="abs" style="left:959.6px;top:471.6px;width:15px;height:15px;border:2px solid #3b93af;border-radius:2px"></div>
<div class="abs" style="left:1091px;top:463px;width:1px;height:31px;background:#5a5a5a"></div>
<div class="abs" style="left:1377px;top:463px;width:1px;height:31px;background:#5a5a5a"></div>
<div class="abs" style="left:1569px;top:463px;width:1px;height:31px;background:#5a5a5a"></div>
<div class="abs th" id="c1" style="letter-spacing:-0.5px;left:1018px">Статус</div>
<div class="abs th" id="c2" style="letter-spacing:-0.28px;left:1108px">Элемент (Модель A)</div>
<div class="abs th" id="c3" style="letter-spacing:-0.28px;left:1393.5px">Элемент (Модель B)</div>
<div class="abs th" id="c4" style="letter-spacing:-0.33px;left:1585.5px">GUID элемента (Модель A)</div>
<div class="abs" style="left:941px;top:494px;width:846px;height:311px;background:#fff"></div>
<div class="abs" id="nodata" style="letter-spacing:0.1px;left:1610px;top:503px;font-size:14px;color:#999;white-space:nowrap">Отсутствуют данные</div>
<div class="abs" style="left:941px;top:805px;width:846px;height:8px;background:#666;border-radius:0 0 3px 3px"></div>
<div class="abs" style="left:941px;top:805px;width:438px;height:8px;background:#3b93af;border-radius:0 0 0 3px"></div>
</div>

<svg id="collicons" style="left:0;top:0" width="1831" height="480" viewBox="0 0 1831 480" fill="none" stroke="#e4e4e4">
<g stroke="none" fill="#e8e8e8" transform="translate(884 381)"><rect x="71" y="59" width="13" height="2"/><rect x="71" y="63.1" width="13" height="2"/><rect x="71" y="67.3" width="9" height="2"/><path d="M81.9 67.4 V72.8 L86.4 70.1 Z"/></g>
<rect x="1617.9" y="438" width="11" height="10.6" rx="2" stroke-width="1.6"/>
<rect x="1623" y="443.2" width="10.6" height="10.2" rx="2" stroke-width="1.6"/>
<path d="M1654 440 H1668 M1654 455 H1668" stroke-width="2"/>
<path d="M1661 443.4 V451.8" stroke-width="1.7"/>
<path d="M1661 441.8 L1664.3 445.4 H1657.7 Z M1661 453.4 L1664.3 449.8 H1657.7 Z" fill="#e4e4e4" stroke="none"/>
<path d="M1688 447 H1702.2" stroke="#cfcfcf" stroke-width="3.6"/>
<path d="M1695 438 V441.6 M1695 456 V452.6" stroke-width="1.6"/>
<path d="M1695 444 L1698.2 440.4 H1691.8 Z M1695 450.2 L1698.2 453.8 H1691.8 Z" fill="#e4e4e4" stroke="none"/>
<path d="M1758.3 445.4 L1763.1 450.2 L1767.9 445.4" stroke-width="1.9"/>
</svg>
<svg style="left:1718px;top:436px" width="22" height="22" viewBox="0 0 24 24"><path fill="#e4e4e4" d="M12,15.5A3.5,3.5 0 0,1 8.5,12A3.5,3.5 0 0,1 12,8.5A3.5,3.5 0 0,1 15.5,12A3.5,3.5 0 0,1 12,15.5M19.43,12.97C19.47,12.65 19.5,12.33 19.5,12C19.5,11.67 19.47,11.34 19.43,11L21.54,9.37C21.73,9.22 21.78,8.95 21.66,8.73L19.66,5.27C19.54,5.05 19.27,4.96 19.05,5.05L16.56,6.05C16.04,5.66 15.5,5.32 14.87,5.07L14.5,2.42C14.46,2.18 14.25,2 14,2H10C9.75,2 9.54,2.18 9.5,2.42L9.13,5.07C8.5,5.32 7.96,5.66 7.44,6.05L4.95,5.05C4.73,4.96 4.46,5.05 4.34,5.27L2.34,8.73C2.21,8.95 2.27,9.22 2.46,9.37L4.57,11C4.53,11.34 4.5,11.67 4.5,12C4.5,12.33 4.53,12.65 4.57,12.97L2.46,14.63C2.27,14.78 2.21,15.05 2.34,15.27L4.34,18.73C4.46,18.95 4.73,19.03 4.95,18.95L7.44,17.94C7.96,18.34 8.5,18.68 9.13,18.93L9.5,21.58C9.54,21.82 9.75,22 10,22H14C14.25,22 14.46,21.82 14.5,21.58L14.87,18.93C15.5,18.67 16.04,18.34 16.56,17.94L19.05,18.95C19.27,19.03 19.54,18.95 19.66,18.73L21.66,15.27C21.78,15.05 21.73,14.78 21.54,14.63L19.43,12.97Z"/></svg>

<!-- RIGHT TOOLBAR -->
<div id="right"></div>
<svg id="rticons" style="left:0;top:0" width="1831" height="818" viewBox="0 0 1831 818" fill="none" stroke="#e2e2e2" stroke-linejoin="round">
<!-- separators -->
<g stroke="#3a3838" stroke-width="1.6">
<path d="M1795 130.3 H1831 M1795 399.3 H1831 M1795 449 H1831 M1795 629.5 H1831 M1795 722.3 H1831"/>
</g>
<!-- active bgs -->
<rect x="1797" y="638.2" width="32" height="31.8" fill="#888" stroke="none"/>
<rect x="1797" y="682" width="32" height="32" fill="#888" stroke="none"/>
<!-- R1 tree cloud -->
<path d="M1809.6 67.2 H1807 A5 5 0 0 1 1806.6 57.3 A7 7 0 0 1 1820 57.3 A5 5 0 0 1 1819.8 67.2 H1817" stroke-width="1.5" stroke-linecap="round"/>
<path d="M1813.3 56.4 V73.2 M1808.6 61.2 L1813.3 65.4 M1816.4 59.8 L1813.3 62.6 M1818 63.4 L1813.3 66.8" stroke-width="1.3" stroke-linecap="round"/>
<!-- R2 screen focus -->
<path d="M1823.6 100.2 V93.4 H1800.3 V110.6 H1808.4 V113.4 H1805" stroke-width="1.2"/>
<path d="M1810.4 107 V102.5 H1815.4 M1820.6 102.5 H1825.7 V107 M1825.7 114 V118.7 H1820.6 M1815.4 118.7 H1810.4 V114" stroke-width="1.2"/>
<path d="M1817.9 106.2 L1822 108.55 V113.25 L1817.9 115.6 L1813.8 113.25 V108.55 Z" fill="#e2e2e2" stroke="none"/>
<!-- R3 ruler -->
<rect x="1800.8" y="150.6" width="24.8" height="7.6" stroke-width="1.3"/>
<path d="M1803.5 158 V156 M1806 158 V154 M1808.5 158 V156 M1811 158 V154.6 M1813.5 158 V153.4 M1816 158 V154.6 M1818.5 158 V156 M1821 158 V154 M1823.4 158 V156" stroke-width="1.1"/>
<path d="M1800.2 161.2 H1826.1" stroke-width="1.9"/>
<!-- R4 planes -->
<path d="M1808.2 193.8 L1817.9 185.8 V204.2 L1808.2 212.6 Z" fill="#e2e2e2" stroke="none"/>
<path d="M1800.6 201.3 L1808.6 195.5 H1825.6 L1817.6 201.3 Z" stroke-width="1.1"/>
<!-- R5 cube section -->
<g stroke-width="1.1">
<rect x="1801.4" y="237.2" width="16" height="16.3"/>
<rect x="1808.7" y="232.3" width="15.8" height="16"/>
<path d="M1801.4 237.2 L1808.7 232.3 M1817.4 237.2 L1824.5 232.3 M1801.4 253.5 L1808.7 248.3 M1817.4 253.5 L1824.5 248.3"/>
<path d="M1810.8 237 L1815.9 233.6 V250 L1810.8 253.5 Z" fill="#e2e2e2"/>
</g>
<!-- R6 plan -->
<g stroke-width="1.2">
<path d="M1802.6 276.4 H1824.8 V296 H1799.3 V279.6 Z"/>
<path d="M1799.3 279.6 H1802.6 V276.4 Z" fill="#e2e2e2"/>
<path d="M1825.9 277.6 V297 H1800.6" stroke-width="1.8"/>
<path d="M1811.8 276.4 V296 M1799.3 285.4 H1824.8" stroke-dasharray="2.4 1.3" stroke-width="1.1"/>
<path d="M1817.6 296 V292.6 H1824.8" stroke-width="1.1"/>
</g>
<!-- R7 target -->
<circle cx="1813" cy="331.1" r="7.3" stroke-width="2"/>
<circle cx="1813" cy="331.1" r="3.7" fill="#e2e2e2" stroke="none"/>
<path d="M1813 319.9 V323.5 M1813 338.7 V342.3 M1801.8 331.1 H1805.4 M1820.6 331.1 H1824.2" stroke-width="2"/>
<!-- R8 flag -->
<circle cx="1813" cy="375.2" r="12.7" stroke-width="1"/>
<path d="M1807.5 381.8 V368.9 H1814 Q1815.3 370.4 1817 370.4 H1820.5 V377.3 H1816.6 Q1815 377.3 1813.8 375.6 H1807.5" stroke-width="1"/>
<!-- R9 grid -->
<g stroke-width="1">
<path d="M1798 428.1 L1827.9 411.3 M1798.3 437.9 L1827.7 421.3 M1799.2 422.1 L1817.9 433 M1807.7 416.2 L1826.7 426.6"/>
</g>
<text x="1797.8" y="420.2" font-family="Liberation Sans, sans-serif" font-size="6.5" font-weight="bold" fill="#e2e2e2" stroke="none">1</text>
<text x="1807.7" y="414" font-family="Liberation Sans, sans-serif" font-size="6.5" font-weight="bold" fill="#e2e2e2" stroke="none">2</text>
<!-- dashed boxes -->
<g stroke-width="1.2" stroke-dasharray="2 1.75" stroke-linejoin="miter">
<rect x="1801.5" y="462" width="23.2" height="22.4"/>
<rect x="1801.5" y="505.6" width="23.2" height="22.6"/>
<rect x="1801.5" y="549.8" width="23.2" height="22.6"/>
<path d="M1811 616.4 H1801.5 V593.8 H1824.7 V603"/>
</g>
<!-- R10 cube -->
<path d="M1813 466.3 L1819 469.7 V476.6 L1813 480 L1807 476.6 V469.7 Z M1807 469.7 L1813 473.1 L1819 469.7 M1813 473.1 V480" stroke-width="1"/>
<!-- R12 slash -->
<path d="M1806 555.2 L1819.4 567.8" stroke="#535353" stroke-width="3"/>
<!-- R13 x box -->
<rect x="1811.1" y="603.2" width="15.9" height="15.9" fill="#e0e0e0" stroke="none"/>
<path d="M1815.1 607.2 L1823 615.2 M1823 607.2 L1815.1 615.2" stroke="#444" stroke-width="1.2"/>
<!-- R14 3d cube -->
<path d="M1801.3 645.2 L1813 642.5 L1824.3 645.8 L1813.3 648.8 Z" fill="#767676" stroke="#e6e6e6" stroke-width="0.8"/>
<path d="M1801.3 645.2 L1813.3 648.8 L1812.6 666.2 L1802.9 659.2 Z" fill="#dedede" stroke="#dedede" stroke-width="0.8"/>
<path d="M1813.3 648.8 L1824.3 645.8 L1823 658.3 L1812.6 666.2 Z" fill="#8c8c8c" stroke="#e6e6e6" stroke-width="1"/>
<!-- R15 orbit -->
<ellipse cx="1813" cy="698.4" rx="10.9" ry="4.6" stroke-width="1.5"/>
<ellipse cx="1813" cy="698.1" rx="4" ry="9.8" stroke-width="1.5"/>
<path d="M1813 698.1 V695 M1813 698.1 L1810.2 700.9 M1813 698.1 L1816.3 700.9" stroke-width="0.8"/>
<!-- corner triangle -->
<path d="M1796.7 805 V808.9 H1800.7 Z" fill="#eee" stroke="none"/>
</svg>
<svg style="left:1805px;top:508.7px" width="16.6" height="16.6" viewBox="0 0 24 24"><path fill="#e2e2e2" d="M12,9A3,3 0 0,0 9,12A3,3 0 0,0 12,15A3,3 0 0,0 15,12A3,3 0 0,0 12,9M12,17A5,5 0 0,1 7,12A5,5 0 0,1 12,7A5,5 0 0,1 17,12A5,5 0 0,1 12,17M12,4.500C7,4.500 2.730,7.610 1,12C2.730,16.390 7,19.500 12,19.500C17,19.500 21.270,16.390 23,12C21.270,7.610 17,4.500 12,4.500Z"/></svg>
<svg style="left:1804.7px;top:552.7px" width="16.6" height="16.6" viewBox="0 0 24 24"><path fill="#e2e2e2" d="M12,9A3,3 0 0,0 9,12A3,3 0 0,0 12,15A3,3 0 0,0 15,12A3,3 0 0,0 12,9M12,17A5,5 0 0,1 7,12A5,5 0 0,1 12,7A5,5 0 0,1 17,12A5,5 0 0,1 12,17M12,4.500C7,4.500 2.730,7.610 1,12C2.730,16.390 7,19.500 12,19.500C17,19.500 21.270,16.390 23,12C21.270,7.610 17,4.500 12,4.500Z"/><path d="M3.5 3.2 L22 21.5" stroke="#535353" stroke-width="3.6"/><path d="M2 4.7 L20.5 23" stroke="#e2e2e2" stroke-width="1.6"/></svg>

</body>
</html>
